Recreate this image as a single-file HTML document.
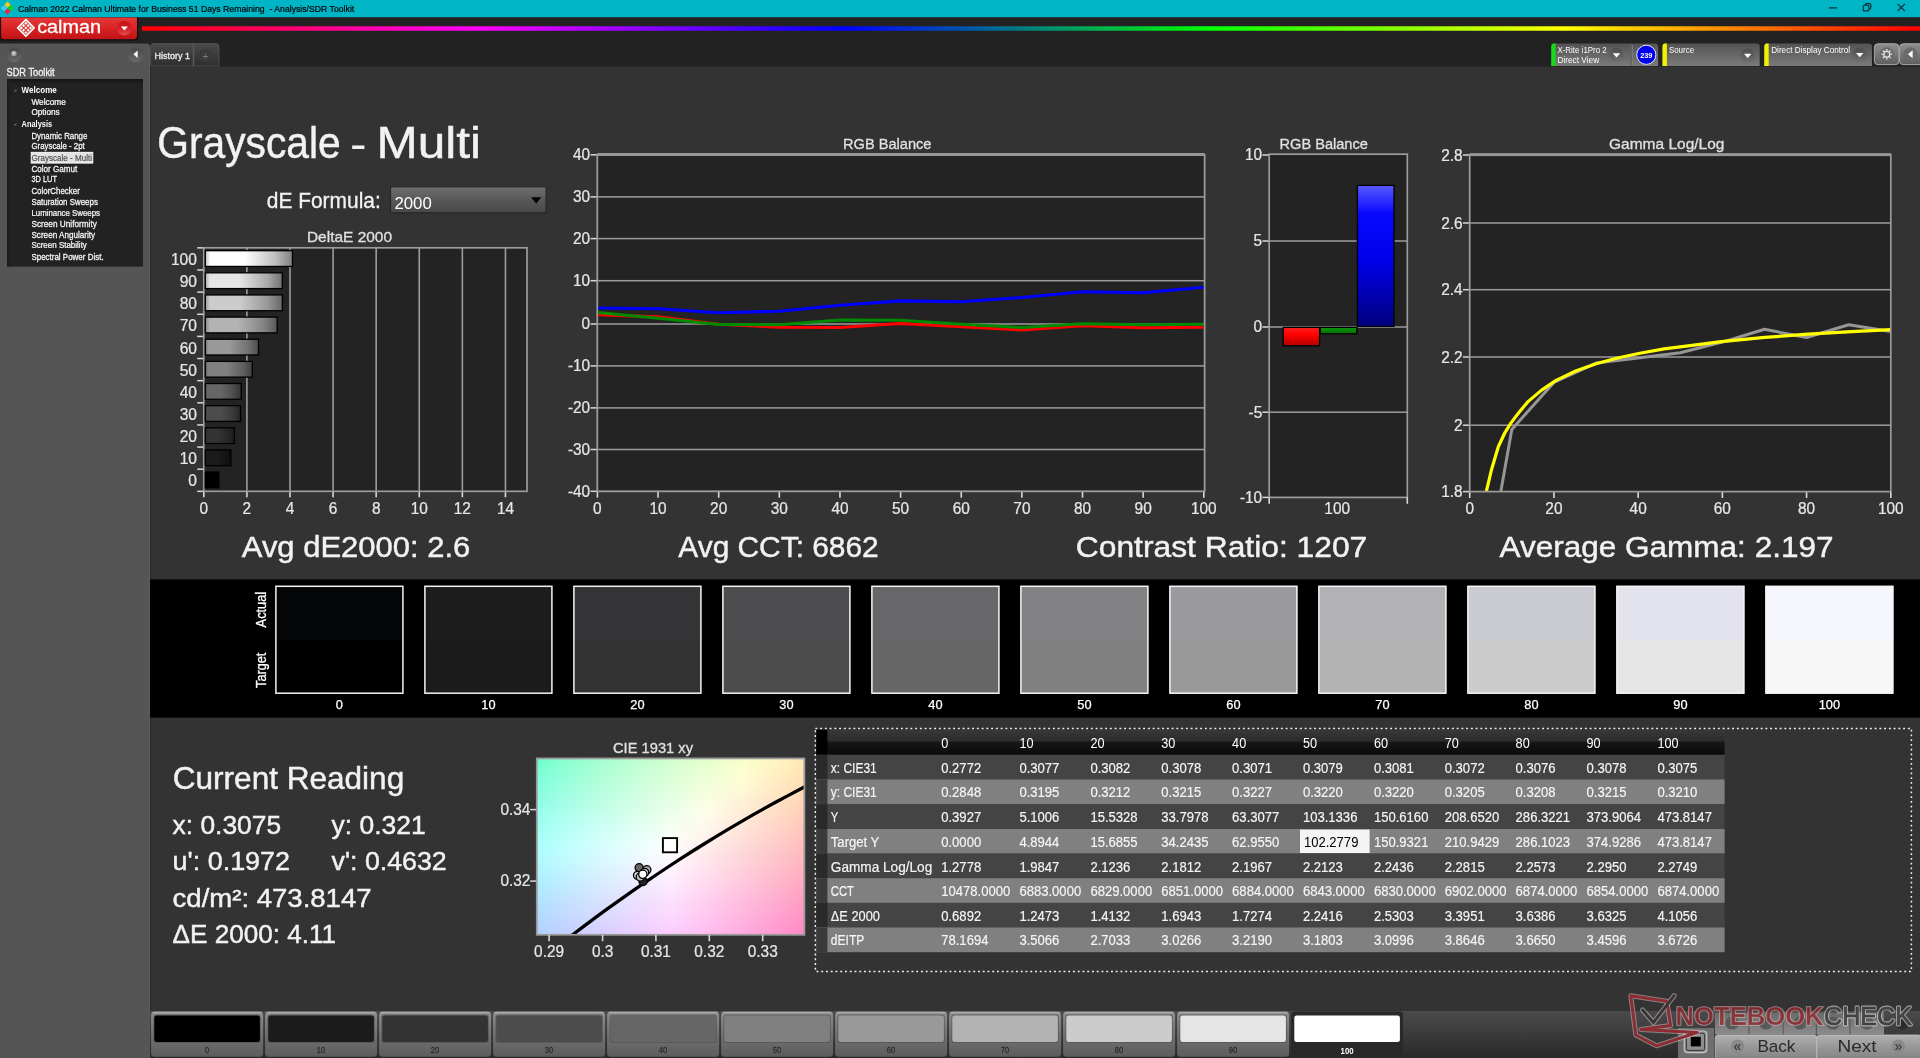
<!DOCTYPE html>
<html><head><meta charset="utf-8"><title>Calman 2022 - Analysis/SDR Toolkit</title>
<style>
html,body{margin:0;padding:0;background:#333333;overflow:hidden}
svg{display:block;font-family:"Liberation Sans",sans-serif;will-change:transform}
text{white-space:pre}
</style></head><body>
<svg width="1920" height="1058" viewBox="0 0 1920 1058">
<defs>
<linearGradient id="rb" x1="0" y1="0" x2="1" y2="0" ><stop offset="0" stop-color="#ff0000"/><stop offset="0.19" stop-color="#ff00ff"/><stop offset="0.395" stop-color="#0000ff"/><stop offset="0.6" stop-color="#00ff00"/><stop offset="0.8" stop-color="#ffff00"/><stop offset="1" stop-color="#ff0000"/></linearGradient>
<linearGradient id="logo" x1="0" y1="0" x2="0" y2="1" ><stop offset="0" stop-color="#e23a3a"/><stop offset="0.45" stop-color="#dc2424"/><stop offset="1" stop-color="#c01216"/></linearGradient>
<linearGradient id="ddr" x1="0" y1="0" x2="0" y2="1" ><stop offset="0" stop-color="#c80e16"/><stop offset="0.5" stop-color="#d42028"/><stop offset="1" stop-color="#e44c4c"/></linearGradient>
<linearGradient id="tab" x1="0" y1="0" x2="0" y2="1" ><stop offset="0" stop-color="#4a4a4a"/><stop offset="1" stop-color="#2e2e2e"/></linearGradient>
<linearGradient id="tb" x1="0" y1="0" x2="0" y2="1" ><stop offset="0" stop-color="#535353"/><stop offset="1" stop-color="#7a7a7a"/></linearGradient>
<linearGradient id="ddg" x1="0" y1="0" x2="0" y2="1" ><stop offset="0" stop-color="#4c4c4c"/><stop offset="1" stop-color="#707070"/></linearGradient>
<linearGradient id="gb" x1="0" y1="0" x2="0" y2="1" ><stop offset="0" stop-color="#8e8e8e"/><stop offset="0.5" stop-color="#777"/><stop offset="1" stop-color="#5e5e5e"/></linearGradient>
<linearGradient id="lb" x1="0" y1="0" x2="0" y2="1" ><stop offset="0" stop-color="#494949"/><stop offset="0.5" stop-color="#585858"/><stop offset="1" stop-color="#6a6a6a"/></linearGradient>
<radialGradient id="knob" cx="0.4" cy="0.35" r="0.7" ><stop offset="0" stop-color="#d8d8d8"/><stop offset="1" stop-color="#8c8c8c"/></radialGradient>
<linearGradient id="tbx" x1="0" y1="0" x2="0" y2="1" ><stop offset="0" stop-color="#141414"/><stop offset="1" stop-color="#222222"/></linearGradient>
<linearGradient id="tby" x1="0" y1="0" x2="1" y2="0" ><stop offset="0" stop-color="#1a1a1a"/><stop offset="1" stop-color="#222222"/></linearGradient>
<linearGradient id="dd" x1="0" y1="0" x2="0" y2="1" ><stop offset="0" stop-color="#707070"/><stop offset="0.5" stop-color="#585858"/><stop offset="1" stop-color="#484848"/></linearGradient>
<linearGradient id="deb0" x1="0" y1="0" x2="1" y2="0" ><stop offset="0" stop-color="#000000"/><stop offset="0.06" stop-color="#000000"/><stop offset="0.45" stop-color="#000000"/><stop offset="0.8" stop-color="#000000"/><stop offset="1" stop-color="#000000"/></linearGradient>
<linearGradient id="deb1" x1="0" y1="0" x2="1" y2="0" ><stop offset="0" stop-color="#141414"/><stop offset="0.06" stop-color="#1b1b1b"/><stop offset="0.45" stop-color="#1b1b1b"/><stop offset="0.8" stop-color="#141414"/><stop offset="1" stop-color="#0d0d0d"/></linearGradient>
<linearGradient id="deb2" x1="0" y1="0" x2="1" y2="0" ><stop offset="0" stop-color="#262626"/><stop offset="0.06" stop-color="#333333"/><stop offset="0.45" stop-color="#333333"/><stop offset="0.8" stop-color="#262626"/><stop offset="1" stop-color="#191919"/></linearGradient>
<linearGradient id="deb3" x1="0" y1="0" x2="1" y2="0" ><stop offset="0" stop-color="#393939"/><stop offset="0.06" stop-color="#4c4c4c"/><stop offset="0.45" stop-color="#4c4c4c"/><stop offset="0.8" stop-color="#393939"/><stop offset="1" stop-color="#262626"/></linearGradient>
<linearGradient id="deb4" x1="0" y1="0" x2="1" y2="0" ><stop offset="0" stop-color="#4c4c4c"/><stop offset="0.06" stop-color="#666666"/><stop offset="0.45" stop-color="#666666"/><stop offset="0.8" stop-color="#4c4c4c"/><stop offset="1" stop-color="#333333"/></linearGradient>
<linearGradient id="deb5" x1="0" y1="0" x2="1" y2="0" ><stop offset="0" stop-color="#606060"/><stop offset="0.06" stop-color="#808080"/><stop offset="0.45" stop-color="#808080"/><stop offset="0.8" stop-color="#606060"/><stop offset="1" stop-color="#404040"/></linearGradient>
<linearGradient id="deb6" x1="0" y1="0" x2="1" y2="0" ><stop offset="0" stop-color="#727272"/><stop offset="0.06" stop-color="#999999"/><stop offset="0.45" stop-color="#999999"/><stop offset="0.8" stop-color="#727272"/><stop offset="1" stop-color="#4c4c4c"/></linearGradient>
<linearGradient id="deb7" x1="0" y1="0" x2="1" y2="0" ><stop offset="0" stop-color="#868686"/><stop offset="0.06" stop-color="#b3b3b3"/><stop offset="0.45" stop-color="#b3b3b3"/><stop offset="0.8" stop-color="#868686"/><stop offset="1" stop-color="#595959"/></linearGradient>
<linearGradient id="deb8" x1="0" y1="0" x2="1" y2="0" ><stop offset="0" stop-color="#999999"/><stop offset="0.06" stop-color="#cccccc"/><stop offset="0.45" stop-color="#cccccc"/><stop offset="0.8" stop-color="#999999"/><stop offset="1" stop-color="#666666"/></linearGradient>
<linearGradient id="deb9" x1="0" y1="0" x2="1" y2="0" ><stop offset="0" stop-color="#ababab"/><stop offset="0.06" stop-color="#e5e5e5"/><stop offset="0.45" stop-color="#e5e5e5"/><stop offset="0.8" stop-color="#ababab"/><stop offset="1" stop-color="#727272"/></linearGradient>
<linearGradient id="deb10" x1="0" y1="0" x2="1" y2="0" ><stop offset="0" stop-color="#bfbfbf"/><stop offset="0.06" stop-color="#ffffff"/><stop offset="0.45" stop-color="#ffffff"/><stop offset="0.8" stop-color="#bfbfbf"/><stop offset="1" stop-color="#7f7f7f"/></linearGradient>
<clipPath id="qclip"><rect x="598.1999999999999" y="154.5" width="605.5" height="336.8"/></clipPath>
<linearGradient id="br" x1="0" y1="0" x2="0" y2="1" ><stop offset="0" stop-color="#ff2020"/><stop offset="0.4" stop-color="#ff0000"/><stop offset="1" stop-color="#b00000"/></linearGradient>
<linearGradient id="bgn" x1="0" y1="0" x2="0" y2="1" ><stop offset="0" stop-color="#10a010"/><stop offset="1" stop-color="#006a00"/></linearGradient>
<linearGradient id="bb" x1="0" y1="0" x2="0" y2="1" ><stop offset="0" stop-color="#5a5aff"/><stop offset="0.2" stop-color="#0808ff"/><stop offset="0.55" stop-color="#0000e8"/><stop offset="1" stop-color="#00007c"/></linearGradient>
<clipPath id="gclip"><rect x="1469.7" y="154.6" width="421.0999999999999" height="337.0"/></clipPath>
<clipPath id="cclip"><rect x="536.8" y="758.4" width="267.6" height="176.39999999999998"/></clipPath>
<filter id="vblur" x="-5%" y="-20%" width="110%" height="140%"><feGaussianBlur stdDeviation="0 4.5"/></filter>
<linearGradient id="cr0" x1="0" y1="0" x2="1" y2="0" ><stop offset="0" stop-color="#47ffc4"/><stop offset="0.125" stop-color="#75ffc3"/><stop offset="0.25" stop-color="#95ffc2"/><stop offset="0.375" stop-color="#afffc1"/><stop offset="0.5" stop-color="#c5ffc0"/><stop offset="0.625" stop-color="#daffbf"/><stop offset="0.75" stop-color="#edffbd"/><stop offset="0.875" stop-color="#feffbc"/><stop offset="1" stop-color="#ffefa9"/></linearGradient>
<linearGradient id="cr1" x1="0" y1="0" x2="1" y2="0" ><stop offset="0" stop-color="#52ffc9"/><stop offset="0.125" stop-color="#7cffc8"/><stop offset="0.25" stop-color="#9affc7"/><stop offset="0.375" stop-color="#b4ffc6"/><stop offset="0.5" stop-color="#caffc5"/><stop offset="0.625" stop-color="#deffc4"/><stop offset="0.75" stop-color="#f1ffc3"/><stop offset="0.875" stop-color="#fffbbe"/><stop offset="1" stop-color="#ffeaaa"/></linearGradient>
<linearGradient id="cr2" x1="0" y1="0" x2="1" y2="0" ><stop offset="0" stop-color="#5bffcd"/><stop offset="0.125" stop-color="#82ffcd"/><stop offset="0.25" stop-color="#a0ffcc"/><stop offset="0.375" stop-color="#b8ffcb"/><stop offset="0.5" stop-color="#ceffca"/><stop offset="0.625" stop-color="#e2ffc9"/><stop offset="0.75" stop-color="#f5ffc8"/><stop offset="0.875" stop-color="#fff7bf"/><stop offset="1" stop-color="#ffe6ab"/></linearGradient>
<linearGradient id="cr3" x1="0" y1="0" x2="1" y2="0" ><stop offset="0" stop-color="#64ffd2"/><stop offset="0.125" stop-color="#89ffd1"/><stop offset="0.25" stop-color="#a5ffd1"/><stop offset="0.375" stop-color="#bdffd0"/><stop offset="0.5" stop-color="#d3ffcf"/><stop offset="0.625" stop-color="#e7ffce"/><stop offset="0.75" stop-color="#f9ffcd"/><stop offset="0.875" stop-color="#fff3c0"/><stop offset="1" stop-color="#ffe2ac"/></linearGradient>
<linearGradient id="cr4" x1="0" y1="0" x2="1" y2="0" ><stop offset="0" stop-color="#6cffd7"/><stop offset="0.125" stop-color="#8fffd6"/><stop offset="0.25" stop-color="#aaffd5"/><stop offset="0.375" stop-color="#c2ffd5"/><stop offset="0.5" stop-color="#d7ffd4"/><stop offset="0.625" stop-color="#ebffd3"/><stop offset="0.75" stop-color="#feffd2"/><stop offset="0.875" stop-color="#ffefc0"/><stop offset="1" stop-color="#ffdead"/></linearGradient>
<linearGradient id="cr5" x1="0" y1="0" x2="1" y2="0" ><stop offset="0" stop-color="#73ffdb"/><stop offset="0.125" stop-color="#94ffdb"/><stop offset="0.25" stop-color="#afffda"/><stop offset="0.375" stop-color="#c7ffd9"/><stop offset="0.5" stop-color="#dcffd9"/><stop offset="0.625" stop-color="#efffd8"/><stop offset="0.75" stop-color="#fffcd4"/><stop offset="0.875" stop-color="#ffebc1"/><stop offset="1" stop-color="#ffdaaf"/></linearGradient>
<linearGradient id="cr6" x1="0" y1="0" x2="1" y2="0" ><stop offset="0" stop-color="#7affe0"/><stop offset="0.125" stop-color="#9affdf"/><stop offset="0.25" stop-color="#b4ffdf"/><stop offset="0.375" stop-color="#cbffde"/><stop offset="0.5" stop-color="#e0ffde"/><stop offset="0.625" stop-color="#f4ffdd"/><stop offset="0.75" stop-color="#fff8d5"/><stop offset="0.875" stop-color="#ffe6c2"/><stop offset="1" stop-color="#ffd5b0"/></linearGradient>
<linearGradient id="cr7" x1="0" y1="0" x2="1" y2="0" ><stop offset="0" stop-color="#81ffe4"/><stop offset="0.125" stop-color="#a0ffe4"/><stop offset="0.25" stop-color="#b9ffe4"/><stop offset="0.375" stop-color="#d0ffe3"/><stop offset="0.5" stop-color="#e5ffe3"/><stop offset="0.625" stop-color="#f8ffe2"/><stop offset="0.75" stop-color="#fff4d6"/><stop offset="0.875" stop-color="#ffe2c3"/><stop offset="1" stop-color="#ffd1b1"/></linearGradient>
<linearGradient id="cr8" x1="0" y1="0" x2="1" y2="0" ><stop offset="0" stop-color="#88ffe9"/><stop offset="0.125" stop-color="#a5ffe9"/><stop offset="0.25" stop-color="#beffe8"/><stop offset="0.375" stop-color="#d5ffe8"/><stop offset="0.5" stop-color="#e9ffe7"/><stop offset="0.625" stop-color="#fdffe7"/><stop offset="0.75" stop-color="#ffefd7"/><stop offset="0.875" stop-color="#ffdec4"/><stop offset="1" stop-color="#ffccb2"/></linearGradient>
<linearGradient id="cr9" x1="0" y1="0" x2="1" y2="0" ><stop offset="0" stop-color="#8effee"/><stop offset="0.125" stop-color="#abffed"/><stop offset="0.25" stop-color="#c3ffed"/><stop offset="0.375" stop-color="#d9ffed"/><stop offset="0.5" stop-color="#eeffec"/><stop offset="0.625" stop-color="#fffdea"/><stop offset="0.75" stop-color="#ffebd7"/><stop offset="0.875" stop-color="#ffd9c5"/><stop offset="1" stop-color="#ffc8b3"/></linearGradient>
<linearGradient id="cr10" x1="0" y1="0" x2="1" y2="0" ><stop offset="0" stop-color="#94fff2"/><stop offset="0.125" stop-color="#b0fff2"/><stop offset="0.25" stop-color="#c8fff2"/><stop offset="0.375" stop-color="#defff2"/><stop offset="0.5" stop-color="#f2fff1"/><stop offset="0.625" stop-color="#fff8eb"/><stop offset="0.75" stop-color="#ffe6d8"/><stop offset="0.875" stop-color="#ffd5c6"/><stop offset="1" stop-color="#ffc3b4"/></linearGradient>
<linearGradient id="cr11" x1="0" y1="0" x2="1" y2="0" ><stop offset="0" stop-color="#9afff7"/><stop offset="0.125" stop-color="#b5fff7"/><stop offset="0.25" stop-color="#cdfff7"/><stop offset="0.375" stop-color="#e3fff6"/><stop offset="0.5" stop-color="#f7fff6"/><stop offset="0.625" stop-color="#fff4eb"/><stop offset="0.75" stop-color="#ffe2d9"/><stop offset="0.875" stop-color="#ffd0c7"/><stop offset="1" stop-color="#ffbfb5"/></linearGradient>
<linearGradient id="cr12" x1="0" y1="0" x2="1" y2="0" ><stop offset="0" stop-color="#a0fffb"/><stop offset="0.125" stop-color="#bbfffb"/><stop offset="0.25" stop-color="#d2fffb"/><stop offset="0.375" stop-color="#e8fffb"/><stop offset="0.5" stop-color="#fcfffb"/><stop offset="0.625" stop-color="#ffefec"/><stop offset="0.75" stop-color="#ffddd9"/><stop offset="0.875" stop-color="#ffccc7"/><stop offset="1" stop-color="#ffbab6"/></linearGradient>
<linearGradient id="cr13" x1="0" y1="0" x2="1" y2="0" ><stop offset="0" stop-color="#a4feff"/><stop offset="0.125" stop-color="#bffeff"/><stop offset="0.25" stop-color="#d6feff"/><stop offset="0.375" stop-color="#ebfeff"/><stop offset="0.5" stop-color="#fffeff"/><stop offset="0.625" stop-color="#ffebec"/><stop offset="0.75" stop-color="#ffd9da"/><stop offset="0.875" stop-color="#ffc7c8"/><stop offset="1" stop-color="#ffb5b7"/></linearGradient>
<linearGradient id="cr14" x1="0" y1="0" x2="1" y2="0" ><stop offset="0" stop-color="#a5f9ff"/><stop offset="0.125" stop-color="#bff9ff"/><stop offset="0.25" stop-color="#d6f9ff"/><stop offset="0.375" stop-color="#ebf9ff"/><stop offset="0.5" stop-color="#fff9ff"/><stop offset="0.625" stop-color="#ffe6ed"/><stop offset="0.75" stop-color="#ffd4db"/><stop offset="0.875" stop-color="#ffc2c9"/><stop offset="1" stop-color="#ffb0b8"/></linearGradient>
<linearGradient id="cr15" x1="0" y1="0" x2="1" y2="0" ><stop offset="0" stop-color="#a5f5ff"/><stop offset="0.125" stop-color="#bff5ff"/><stop offset="0.25" stop-color="#d6f4ff"/><stop offset="0.375" stop-color="#ebf4ff"/><stop offset="0.5" stop-color="#fef4ff"/><stop offset="0.625" stop-color="#ffe2ed"/><stop offset="0.75" stop-color="#ffcfdb"/><stop offset="0.875" stop-color="#ffbdca"/><stop offset="1" stop-color="#ffabb9"/></linearGradient>
<linearGradient id="cr16" x1="0" y1="0" x2="1" y2="0" ><stop offset="0" stop-color="#a6f0ff"/><stop offset="0.125" stop-color="#bff0ff"/><stop offset="0.25" stop-color="#d6efff"/><stop offset="0.375" stop-color="#ebefff"/><stop offset="0.5" stop-color="#feefff"/><stop offset="0.625" stop-color="#ffddee"/><stop offset="0.75" stop-color="#ffcbdc"/><stop offset="0.875" stop-color="#ffb8cb"/><stop offset="1" stop-color="#ffa6ba"/></linearGradient>
<linearGradient id="cr17" x1="0" y1="0" x2="1" y2="0" ><stop offset="0" stop-color="#a6ebff"/><stop offset="0.125" stop-color="#bfebff"/><stop offset="0.25" stop-color="#d6ebff"/><stop offset="0.375" stop-color="#eaeaff"/><stop offset="0.5" stop-color="#feeaff"/><stop offset="0.625" stop-color="#ffd8ee"/><stop offset="0.75" stop-color="#ffc6dd"/><stop offset="0.875" stop-color="#ffb3cb"/><stop offset="1" stop-color="#ffa1bb"/></linearGradient>
<linearGradient id="cr18" x1="0" y1="0" x2="1" y2="0" ><stop offset="0" stop-color="#a7e7ff"/><stop offset="0.125" stop-color="#c0e6ff"/><stop offset="0.25" stop-color="#d6e6ff"/><stop offset="0.375" stop-color="#eae5ff"/><stop offset="0.5" stop-color="#fde5ff"/><stop offset="0.625" stop-color="#ffd3ef"/><stop offset="0.75" stop-color="#ffc1dd"/><stop offset="0.875" stop-color="#ffaecc"/><stop offset="1" stop-color="#ff9cbb"/></linearGradient>
<linearGradient id="cr19" x1="0" y1="0" x2="1" y2="0" ><stop offset="0" stop-color="#a7e2ff"/><stop offset="0.125" stop-color="#c0e1ff"/><stop offset="0.25" stop-color="#d6e1ff"/><stop offset="0.375" stop-color="#eae0ff"/><stop offset="0.5" stop-color="#fddfff"/><stop offset="0.625" stop-color="#ffceef"/><stop offset="0.75" stop-color="#ffbcde"/><stop offset="0.875" stop-color="#ffa9cd"/><stop offset="1" stop-color="#ff96bc"/></linearGradient>
<linearGradient id="cr20" x1="0" y1="0" x2="1" y2="0" ><stop offset="0" stop-color="#a8ddff"/><stop offset="0.125" stop-color="#c0dcff"/><stop offset="0.25" stop-color="#d6dcff"/><stop offset="0.375" stop-color="#eadbff"/><stop offset="0.5" stop-color="#fddaff"/><stop offset="0.625" stop-color="#ffc9ef"/><stop offset="0.75" stop-color="#ffb7de"/><stop offset="0.875" stop-color="#ffa4ce"/><stop offset="1" stop-color="#ff90bd"/></linearGradient>
<linearGradient id="cr21" x1="0" y1="0" x2="1" y2="0" ><stop offset="0" stop-color="#a8d8ff"/><stop offset="0.125" stop-color="#c0d7ff"/><stop offset="0.25" stop-color="#d6d7ff"/><stop offset="0.375" stop-color="#ead6ff"/><stop offset="0.5" stop-color="#fcd5ff"/><stop offset="0.625" stop-color="#ffc4f0"/><stop offset="0.75" stop-color="#ffb1df"/><stop offset="0.875" stop-color="#ff9ece"/><stop offset="1" stop-color="#ff8abe"/></linearGradient>
<linearGradient id="cr22" x1="0" y1="0" x2="1" y2="0" ><stop offset="0" stop-color="#a9d3ff"/><stop offset="0.125" stop-color="#c0d2ff"/><stop offset="0.25" stop-color="#d6d1ff"/><stop offset="0.375" stop-color="#ead0ff"/><stop offset="0.5" stop-color="#fcd0ff"/><stop offset="0.625" stop-color="#ffbff0"/><stop offset="0.75" stop-color="#ffacdf"/><stop offset="0.875" stop-color="#ff99cf"/><stop offset="1" stop-color="#ff84bf"/></linearGradient>
<linearGradient id="cr23" x1="0" y1="0" x2="1" y2="0" ><stop offset="0" stop-color="#a9ceff"/><stop offset="0.125" stop-color="#c1cdff"/><stop offset="0.25" stop-color="#d6ccff"/><stop offset="0.375" stop-color="#e9cbff"/><stop offset="0.5" stop-color="#fccaff"/><stop offset="0.625" stop-color="#ffbaf1"/><stop offset="0.75" stop-color="#ffa7e0"/><stop offset="0.875" stop-color="#ff93d0"/><stop offset="1" stop-color="#ff7ec0"/></linearGradient>
<linearGradient id="cr24" x1="0" y1="0" x2="1" y2="0" ><stop offset="0" stop-color="#a9c9ff"/><stop offset="0.125" stop-color="#c1c8ff"/><stop offset="0.25" stop-color="#d6c7ff"/><stop offset="0.375" stop-color="#e9c6ff"/><stop offset="0.5" stop-color="#fbc5ff"/><stop offset="0.625" stop-color="#ffb5f1"/><stop offset="0.75" stop-color="#ffa1e1"/><stop offset="0.875" stop-color="#ff8dd0"/><stop offset="1" stop-color="#ff77c0"/></linearGradient>
<linearGradient id="cr25" x1="0" y1="0" x2="1" y2="0" ><stop offset="0" stop-color="#aac4ff"/><stop offset="0.125" stop-color="#c1c3ff"/><stop offset="0.25" stop-color="#d6c2ff"/><stop offset="0.375" stop-color="#e9c0ff"/><stop offset="0.5" stop-color="#fbbfff"/><stop offset="0.625" stop-color="#ffaff2"/><stop offset="0.75" stop-color="#ff9be1"/><stop offset="0.875" stop-color="#ff86d1"/><stop offset="1" stop-color="#ff6fc1"/></linearGradient>
<linearGradient id="th" x1="0" y1="0" x2="0" y2="1" ><stop offset="0" stop-color="#383838"/><stop offset="0.45" stop-color="#2c2c2c"/><stop offset="0.5" stop-color="#161616"/><stop offset="1" stop-color="#0a0a0a"/></linearGradient>
<linearGradient id="bs" x1="0" y1="0" x2="0" y2="1" ><stop offset="0" stop-color="#4a4a4a"/><stop offset="0.2" stop-color="#444444"/><stop offset="1" stop-color="#2a2a2a"/></linearGradient>
<linearGradient id="bbtn" x1="0" y1="0" x2="0" y2="1" ><stop offset="0" stop-color="#8e8e8e"/><stop offset="0.5" stop-color="#737373"/><stop offset="1" stop-color="#5c5c5c"/></linearGradient>
<linearGradient id="nb" x1="0" y1="0" x2="0" y2="1" ><stop offset="0" stop-color="#b0b0b0"/><stop offset="0.5" stop-color="#929292"/><stop offset="1" stop-color="#7c7c7c"/></linearGradient>
<linearGradient id="nb2" x1="0" y1="0" x2="0" y2="1" ><stop offset="0" stop-color="#6a6a6a"/><stop offset="1" stop-color="#8c8c8c"/></linearGradient>
</defs>
<rect x="0" y="0" width="1920" height="1058" fill="#333333" />
<rect x="0" y="0" width="1920" height="17.4" fill="#00b5c5" />
<path d="M7.5 1.6L10.6 4.7L7.5 7.8L4.4 4.7Z" fill="#ffc814"/>
<path d="M4 5L7.1 8.1L4 11.2L0.9 8.1Z" fill="#48c8f8"/>
<path d="M10.9 5L14 8.1L10.9 11.2L7.8 8.1Z" fill="#10d018"/>
<path d="M7.5 8.4L10.6 11.5L7.5 14.6L4.4 11.5Z" fill="#f02058"/>
<text transform="translate(17.9,11.9) scale(0.8962,1)" font-size="9.7" fill="#000" text-anchor="start" font-weight="normal" stroke="#000" stroke-width="0.2">Calman 2022 Calman Ultimate for Business 51 Days Remaining  - Analysis/SDR Toolkit</text>
<line x1="1829" y1="7.9" x2="1837" y2="7.9" stroke="#0a2a30" stroke-width="1.2" />
<rect x="1863.3" y="5.3" width="5.6" height="5.6" rx="1" fill="none" stroke="#0a2a30" stroke-width="1.1"/>
<path d="M1865.3 5.2V4.6Q1865.3 3.6 1866.3 3.6H1869.6Q1870.8 3.6 1870.8 4.8V8Q1870.8 9 1869.8 9H1869.2" fill="none" stroke="#0a2a30" stroke-width="1.1"/>
<path d="M1897.6 3.9L1904.9 11.1M1904.9 3.9L1897.6 11.1" stroke="#0a2a30" stroke-width="1.2" fill="none"/>
<rect x="0" y="17.4" width="1920" height="49.2" fill="#222222" />
<rect x="142" y="26.4" width="1778" height="4.2" fill="url(#rb)"/>
<rect x="142" y="26" width="1778" height="5" fill="url(#rb)" opacity="0.35"/>
<path d="M1 17.4H137V36.5Q137 39.3 134 39.3H4Q1 39.3 1 36.5Z" fill="url(#logo)"/>
<path d="M0.5 17.4V37Q0.5 40 4 40H134Q137.6 40 137.6 37V17.4" fill="none" stroke="#160404" stroke-width="1.2" opacity="0.9"/>
<path d="M25.9 19.7L34.099999999999994 27.9L25.9 36.099999999999994L17.7 27.9Z" fill="none" stroke="#fff" stroke-width="1.7" stroke-linejoin="round"/>
<path d="M25.9 21.7L27.5 23.3L25.9 24.9L24.3 23.3Z" fill="#fff"/>
<path d="M23.6 24L25.2 25.6L23.6 27.2L22 25.6Z" fill="#fff"/>
<path d="M21.3 26.3L22.9 27.9L21.3 29.5L19.7 27.9Z" fill="#fff"/>
<path d="M28.2 24L29.8 25.6L28.2 27.2L26.6 25.6Z" fill="#fff"/>
<path d="M25.9 26.3L27.5 27.9L25.9 29.5L24.3 27.9Z" fill="#fff"/>
<path d="M23.6 28.6L25.2 30.2L23.6 31.8L22 30.2Z" fill="#fff"/>
<path d="M30.5 26.3L32.1 27.9L30.5 29.5L28.9 27.9Z" fill="#fff"/>
<path d="M28.2 28.6L29.8 30.2L28.2 31.8L26.6 30.2Z" fill="#fff"/>
<path d="M25.9 30.9L27.5 32.5L25.9 34.1L24.3 32.5Z" fill="#fff"/>
<text transform="translate(37.2,32.7) scale(1.1056,1)" font-size="17.9" fill="#fff" text-anchor="start" font-weight="normal" stroke="#fff" stroke-width="0.28">calman</text>
<circle cx="124.4" cy="28.2" r="7.3" fill="url(#ddr)"/>
<path d="M120.9 26.6H127.9L124.4 30.6Z" fill="#fff"/>
<path d="M150.7 66V46.5Q150.7 43.6 153.7 43.6H216Q219 43.6 219 46.5V66Z" fill="url(#tab)" stroke="#555" stroke-width="0.8"/>
<rect x="192.7" y="44" width="1.6" height="22" fill="#585858" />
<text transform="translate(154.5,58.6) scale(0.935,1)" font-size="9.6" fill="#f0f0f0" text-anchor="start" font-weight="normal" stroke="#f0f0f0" stroke-width="0.3">History 1</text>
<circle cx="205.3" cy="55.5" r="6.8" fill="#3a3a3a"/>
<text transform="translate(205.3,60)" font-size="10" fill="#777" text-anchor="middle" font-weight="normal" >+</text>
<path d="M1551.3 66V46.4Q1551.3 43.5 1554.3 43.5H1655.2Q1658.2 43.5 1658.2 46.4V66Z" fill="url(#tb)"/>
<path d="M1551.3 66V46.4Q1551.3 43.8 1553.3 43.6H1555.7V66Z" fill="#18d818"/>
<rect x="1630.6" y="45" width="1.2" height="21" fill="#5a5a5a" />
<rect x="1631.8" y="45" width="0.8" height="21" fill="#8a8a8a" />
<text transform="translate(1557.4,52.8) scale(0.8626,1)" font-size="9.2" fill="#fff" text-anchor="start" font-weight="normal" >X-Rite i1Pro 2</text>
<text transform="translate(1557.4,63.2) scale(0.9017,1)" font-size="9.2" fill="#fff" text-anchor="start" font-weight="normal" >Direct View</text>
<circle cx="1616.5" cy="55.2" r="7.2" fill="url(#ddg)"/>
<path d="M1612.8 53.300000000000004H1620.2L1616.5 57.6Z" fill="#fff"/>
<circle cx="1646.3" cy="54.8" r="9.6" fill="#0000f0" stroke="#e8e8ff" stroke-width="1"/>
<text transform="translate(1646.3,57.8) scale(0.92,1)" font-size="8" fill="#fff" text-anchor="middle" font-weight="bold" >239</text>
<path d="M1662.5 66V46.4Q1662.5 43.5 1665.5 43.5H1756.7Q1759.7 43.5 1759.7 46.4V66Z" fill="url(#tb)"/>
<path d="M1662.5 66V46.4Q1662.5 43.8 1664.5 43.6H1666.9V66Z" fill="#f2f200"/>
<text transform="translate(1668.9,52.8) scale(0.8645,1)" font-size="9.2" fill="#fff" text-anchor="start" font-weight="normal" >Source</text>
<circle cx="1747.7" cy="55.6" r="7.2" fill="url(#ddg)"/>
<path d="M1744.0 53.7H1751.4L1747.7 58.0Z" fill="#fff"/>
<path d="M1764.3 66V46.4Q1764.3 43.5 1767.3 43.5H1869Q1872 43.5 1872 46.4V66Z" fill="url(#tb)"/>
<path d="M1764.3 66V46.4Q1764.3 43.8 1766.3 43.6H1768.7V66Z" fill="#f2f200"/>
<text transform="translate(1771.2,52.8) scale(0.888,1)" font-size="9.2" fill="#fff" text-anchor="start" font-weight="normal" >Direct Display Control</text>
<circle cx="1859.7" cy="54.8" r="7.2" fill="url(#ddg)"/>
<path d="M1856.0 52.9H1863.4L1859.7 57.199999999999996Z" fill="#fff"/>
<rect x="1874.4" y="43.8" width="24.6" height="20.8" rx="3.5" fill="url(#gb)" stroke="#a8a8a8" stroke-width="1"/>
<rect x="1899.6" y="43.8" width="24.6" height="20.8" rx="3.5" fill="url(#gb)" stroke="#a8a8a8" stroke-width="1"/>
<circle cx="1886.8" cy="54.2" r="7" fill="#6a6a6a"/>
<circle cx="1910.5" cy="54.2" r="7" fill="#6a6a6a"/>
<line x1="1890.20" y1="54.20" x2="1892.10" y2="54.20" stroke="#e6e6e6" stroke-width="1.35"/><line x1="1889.20" y1="56.60" x2="1890.55" y2="57.95" stroke="#e6e6e6" stroke-width="1.35"/><line x1="1886.80" y1="57.60" x2="1886.80" y2="59.50" stroke="#e6e6e6" stroke-width="1.35"/><line x1="1884.40" y1="56.60" x2="1883.05" y2="57.95" stroke="#e6e6e6" stroke-width="1.35"/><line x1="1883.40" y1="54.20" x2="1881.50" y2="54.20" stroke="#e6e6e6" stroke-width="1.35"/><line x1="1884.40" y1="51.80" x2="1883.05" y2="50.45" stroke="#e6e6e6" stroke-width="1.35"/><line x1="1886.80" y1="50.80" x2="1886.80" y2="48.90" stroke="#e6e6e6" stroke-width="1.35"/><line x1="1889.20" y1="51.80" x2="1890.55" y2="50.45" stroke="#e6e6e6" stroke-width="1.35"/>
<circle cx="1886.8" cy="54.2" r="2.9" fill="none" stroke="#e6e6e6" stroke-width="1.2"/>
<path d="M1912.6 50.2V58.2L1908 54.2Z" fill="#fff"/>
<path d="M0 1058V43.4H146.4Q150 43.4 150 47V1058Z" fill="#555555"/>
<rect x="149.2" y="48" width="0.8" height="963" fill="#5e5e5e" />
<rect x="150" y="66" width="1" height="945" fill="#2b2b2b" />
<circle cx="14.1" cy="54.8" r="7.5" fill="url(#lb)"/>
<circle cx="14" cy="53.6" r="2.7" fill="url(#knob)"/>
<circle cx="135.6" cy="54.8" r="7.5" fill="url(#lb)"/>
<path d="M137.6 50.4V58L133.4 54.2Z" fill="#fff"/>
<text transform="translate(6.5,75.9) scale(0.8735,1)" font-size="10.6" fill="#f4f4f4" text-anchor="start" font-weight="normal" stroke="#f4f4f4" stroke-width="0.3">SDR Toolkit</text>
<rect x="7" y="79" width="136" height="187.6" fill="#222222" />
<rect x="7" y="79" width="136" height="5" fill="url(#tbx)" />
<rect x="7" y="79" width="4" height="187.6" fill="url(#tby)" />
<text transform="translate(21.6,93) scale(0.9499,1)" font-size="8.5" fill="#fff" text-anchor="start" font-weight="bold" >Welcome</text>
<path d="M16.4 88.8V91.6H13.6Z" fill="#666"/>
<text transform="translate(31.4,104.5) scale(0.9898,1)" font-size="8.4" fill="#f6f6f6" text-anchor="start" font-weight="normal" stroke="#f6f6f6" stroke-width="0.25">Welcome</text>
<text transform="translate(31.4,115.2) scale(0.9741,1)" font-size="8.4" fill="#f6f6f6" text-anchor="start" font-weight="normal" stroke="#f6f6f6" stroke-width="0.25">Options</text>
<text transform="translate(21.6,126.8) scale(0.8752,1)" font-size="8.5" fill="#fff" text-anchor="start" font-weight="bold" >Analysis</text>
<path d="M16.4 122.6V125.39999999999999H13.6Z" fill="#666"/>
<text transform="translate(31.4,138.5) scale(0.9371,1)" font-size="8.4" fill="#f6f6f6" text-anchor="start" font-weight="normal" stroke="#f6f6f6" stroke-width="0.25">Dynamic Range</text>
<text transform="translate(31.4,149.3) scale(0.9393,1)" font-size="8.4" fill="#f6f6f6" text-anchor="start" font-weight="normal" stroke="#f6f6f6" stroke-width="0.25">Grayscale - 2pt</text>
<rect x="31.2" y="152.29999999999998" width="61.6" height="10.8" fill="#e2e2e2" stroke="#fff" stroke-width="0.9"/>
<text transform="translate(31.6,160.5) scale(0.9601,1)" font-size="8.4" fill="#555" text-anchor="start" font-weight="normal" stroke="#555" stroke-width="0.2">Grayscale - Multi</text>
<text transform="translate(31.4,171.7) scale(0.9661,1)" font-size="8.4" fill="#f6f6f6" text-anchor="start" font-weight="normal" stroke="#f6f6f6" stroke-width="0.25">Color Gamut</text>
<text transform="translate(31.4,182.3) scale(0.8845,1)" font-size="8.4" fill="#f6f6f6" text-anchor="start" font-weight="normal" stroke="#f6f6f6" stroke-width="0.25">3D LUT</text>
<text transform="translate(31.4,193.5) scale(0.9444,1)" font-size="8.4" fill="#f6f6f6" text-anchor="start" font-weight="normal" stroke="#f6f6f6" stroke-width="0.25">ColorChecker</text>
<text transform="translate(31.4,204.7) scale(0.9445,1)" font-size="8.4" fill="#f6f6f6" text-anchor="start" font-weight="normal" stroke="#f6f6f6" stroke-width="0.25">Saturation Sweeps</text>
<text transform="translate(31.4,215.5) scale(0.9357,1)" font-size="8.4" fill="#f6f6f6" text-anchor="start" font-weight="normal" stroke="#f6f6f6" stroke-width="0.25">Luminance Sweeps</text>
<text transform="translate(31.4,226.6) scale(0.9812,1)" font-size="8.4" fill="#f6f6f6" text-anchor="start" font-weight="normal" stroke="#f6f6f6" stroke-width="0.25">Screen Uniformity</text>
<text transform="translate(31.4,237.7) scale(0.969,1)" font-size="8.4" fill="#f6f6f6" text-anchor="start" font-weight="normal" stroke="#f6f6f6" stroke-width="0.25">Screen Angularity</text>
<text transform="translate(31.4,248.4) scale(0.9509,1)" font-size="8.4" fill="#f6f6f6" text-anchor="start" font-weight="normal" stroke="#f6f6f6" stroke-width="0.25">Screen Stability</text>
<text transform="translate(31.4,259.5) scale(0.9488,1)" font-size="8.4" fill="#f6f6f6" text-anchor="start" font-weight="normal" stroke="#f6f6f6" stroke-width="0.25">Spectral Power Dist.</text>
<text transform="translate(157.2,158.2) scale(0.9355,1)" font-size="43.6" fill="#f2f2f2" text-anchor="start" font-weight="normal" stroke="#f2f2f2" stroke-width="0.45">Grayscale</text>
<text transform="translate(350.1,158.9) scale(1.14,1)" font-size="43.6" fill="#f2f2f2" text-anchor="start" font-weight="normal" >-</text>
<text transform="translate(376.4,158.2) scale(1.1362,1)" font-size="43.6" fill="#f2f2f2" text-anchor="start" font-weight="normal" stroke="#f2f2f2" stroke-width="0.45">Multi</text>
<text transform="translate(266.8,207.6) scale(0.9601,1)" font-size="21.8" fill="#f2f2f2" text-anchor="start" font-weight="normal" stroke="#f2f2f2" stroke-width="0.3">dE Formula:</text>
<rect x="390.5" y="186.8" width="155.6" height="26" fill="url(#dd)" stroke="#272727" stroke-width="1.2"/>
<text transform="translate(394.4,208.8) scale(1.0067,1)" font-size="16.7" fill="#fff" text-anchor="start" font-weight="normal" >2000</text>
<path d="M531 197.3H541.4L536.2 203.4Z" fill="#000"/>
<rect x="203.8" y="247.8" width="323.2" height="243.5" fill="#232323" />
<text transform="translate(349.5,241.9) scale(1.0184,1)" font-size="15.2" fill="#e0e0e0" text-anchor="middle" font-weight="normal" stroke="#e0e0e0" stroke-width="0.3">DeltaE 2000</text>
<rect x="246.093" y="247.8" width="1.6" height="243.5" fill="#9c9c9c" />
<rect x="246.093" y="491.3" width="1.6" height="6" fill="#d8d8d8" />
<rect x="289.187" y="247.8" width="1.6" height="243.5" fill="#9c9c9c" />
<rect x="289.187" y="491.3" width="1.6" height="6" fill="#d8d8d8" />
<rect x="332.28" y="247.8" width="1.6" height="243.5" fill="#9c9c9c" />
<rect x="332.28" y="491.3" width="1.6" height="6" fill="#d8d8d8" />
<rect x="375.373" y="247.8" width="1.6" height="243.5" fill="#9c9c9c" />
<rect x="375.373" y="491.3" width="1.6" height="6" fill="#d8d8d8" />
<rect x="418.467" y="247.8" width="1.6" height="243.5" fill="#9c9c9c" />
<rect x="418.467" y="491.3" width="1.6" height="6" fill="#d8d8d8" />
<rect x="461.56" y="247.8" width="1.6" height="243.5" fill="#9c9c9c" />
<rect x="461.56" y="491.3" width="1.6" height="6" fill="#d8d8d8" />
<rect x="504.653" y="247.8" width="1.6" height="243.5" fill="#9c9c9c" />
<rect x="504.653" y="491.3" width="1.6" height="6" fill="#d8d8d8" />
<rect x="203" y="491.3" width="1.6" height="6" fill="#d8d8d8" />
<rect x="203.8" y="247.8" width="323.2" height="243.5" fill="none" stroke="#9c9c9c" stroke-width="1.7"/>
<rect x="197.2" y="468.464" width="6" height="1.5" fill="#d8d8d8" />
<rect x="205.3" y="472.064" width="13.55" height="15.7364" fill="url(#deb0)" stroke="#000" stroke-width="1.3"/>
<text transform="translate(197,486.332) scale(0.97,1)" font-size="16.1" fill="#e6e6e6" text-anchor="end" font-weight="normal" stroke="#e6e6e6" stroke-width="0.25">0</text>
<rect x="197.2" y="446.327" width="6" height="1.5" fill="#d8d8d8" />
<rect x="205.3" y="449.927" width="25.5752" height="15.7364" fill="url(#deb1)" stroke="#000" stroke-width="1.3"/>
<text transform="translate(197,464.195) scale(0.97,1)" font-size="16.1" fill="#e6e6e6" text-anchor="end" font-weight="normal" stroke="#e6e6e6" stroke-width="0.25">10</text>
<rect x="197.2" y="424.191" width="6" height="1.5" fill="#d8d8d8" />
<rect x="205.3" y="427.791" width="29.1497" height="15.7364" fill="url(#deb2)" stroke="#000" stroke-width="1.3"/>
<text transform="translate(197,442.059) scale(0.97,1)" font-size="16.1" fill="#e6e6e6" text-anchor="end" font-weight="normal" stroke="#e6e6e6" stroke-width="0.25">20</text>
<rect x="197.2" y="402.055" width="6" height="1.5" fill="#d8d8d8" />
<rect x="205.3" y="405.655" width="35.2065" height="15.7364" fill="url(#deb3)" stroke="#000" stroke-width="1.3"/>
<text transform="translate(197,419.923) scale(0.97,1)" font-size="16.1" fill="#e6e6e6" text-anchor="end" font-weight="normal" stroke="#e6e6e6" stroke-width="0.25">30</text>
<rect x="197.2" y="379.918" width="6" height="1.5" fill="#d8d8d8" />
<rect x="205.3" y="383.518" width="35.9197" height="15.7364" fill="url(#deb4)" stroke="#000" stroke-width="1.3"/>
<text transform="translate(197,397.786) scale(0.97,1)" font-size="16.1" fill="#e6e6e6" text-anchor="end" font-weight="normal" stroke="#e6e6e6" stroke-width="0.25">40</text>
<rect x="197.2" y="357.782" width="6" height="1.5" fill="#d8d8d8" />
<rect x="205.3" y="361.382" width="46.999" height="15.7364" fill="url(#deb5)" stroke="#000" stroke-width="1.3"/>
<text transform="translate(197,375.65) scale(0.97,1)" font-size="16.1" fill="#e6e6e6" text-anchor="end" font-weight="normal" stroke="#e6e6e6" stroke-width="0.25">50</text>
<rect x="197.2" y="335.645" width="6" height="1.5" fill="#d8d8d8" />
<rect x="205.3" y="339.245" width="53.2195" height="15.7364" fill="url(#deb6)" stroke="#000" stroke-width="1.3"/>
<text transform="translate(197,353.514) scale(0.97,1)" font-size="16.1" fill="#e6e6e6" text-anchor="end" font-weight="normal" stroke="#e6e6e6" stroke-width="0.25">60</text>
<rect x="197.2" y="313.509" width="6" height="1.5" fill="#d8d8d8" />
<rect x="205.3" y="317.109" width="71.8531" height="15.7364" fill="url(#deb7)" stroke="#000" stroke-width="1.3"/>
<text transform="translate(197,331.377) scale(0.97,1)" font-size="16.1" fill="#e6e6e6" text-anchor="end" font-weight="normal" stroke="#e6e6e6" stroke-width="0.25">70</text>
<rect x="197.2" y="291.373" width="6" height="1.5" fill="#d8d8d8" />
<rect x="205.3" y="294.973" width="77.0997" height="15.7364" fill="url(#deb8)" stroke="#000" stroke-width="1.3"/>
<text transform="translate(197,309.241) scale(0.97,1)" font-size="16.1" fill="#e6e6e6" text-anchor="end" font-weight="normal" stroke="#e6e6e6" stroke-width="0.25">80</text>
<rect x="197.2" y="269.236" width="6" height="1.5" fill="#d8d8d8" />
<rect x="205.3" y="272.836" width="76.9683" height="15.7364" fill="url(#deb9)" stroke="#000" stroke-width="1.3"/>
<text transform="translate(197,287.105) scale(0.97,1)" font-size="16.1" fill="#e6e6e6" text-anchor="end" font-weight="normal" stroke="#e6e6e6" stroke-width="0.25">90</text>
<rect x="197.2" y="247.1" width="6" height="1.5" fill="#d8d8d8" />
<rect x="205.3" y="250.7" width="87.162" height="15.7364" fill="url(#deb10)" stroke="#000" stroke-width="1.3"/>
<text transform="translate(197,264.968) scale(0.97,1)" font-size="16.1" fill="#e6e6e6" text-anchor="end" font-weight="normal" stroke="#e6e6e6" stroke-width="0.25">100</text>
<rect x="197.2" y="490.6" width="6" height="1.5" fill="#d8d8d8" />
<text transform="translate(203.8,514) scale(0.97,1)" font-size="15.9" fill="#e6e6e6" text-anchor="middle" font-weight="normal" stroke="#e6e6e6" stroke-width="0.25">0</text>
<text transform="translate(246.893,514) scale(0.97,1)" font-size="15.9" fill="#e6e6e6" text-anchor="middle" font-weight="normal" stroke="#e6e6e6" stroke-width="0.25">2</text>
<text transform="translate(289.987,514) scale(0.97,1)" font-size="15.9" fill="#e6e6e6" text-anchor="middle" font-weight="normal" stroke="#e6e6e6" stroke-width="0.25">4</text>
<text transform="translate(333.08,514) scale(0.97,1)" font-size="15.9" fill="#e6e6e6" text-anchor="middle" font-weight="normal" stroke="#e6e6e6" stroke-width="0.25">6</text>
<text transform="translate(376.173,514) scale(0.97,1)" font-size="15.9" fill="#e6e6e6" text-anchor="middle" font-weight="normal" stroke="#e6e6e6" stroke-width="0.25">8</text>
<text transform="translate(419.267,514) scale(0.97,1)" font-size="15.9" fill="#e6e6e6" text-anchor="middle" font-weight="normal" stroke="#e6e6e6" stroke-width="0.25">10</text>
<text transform="translate(462.36,514) scale(0.97,1)" font-size="15.9" fill="#e6e6e6" text-anchor="middle" font-weight="normal" stroke="#e6e6e6" stroke-width="0.25">12</text>
<text transform="translate(505.453,514) scale(0.97,1)" font-size="15.9" fill="#e6e6e6" text-anchor="middle" font-weight="normal" stroke="#e6e6e6" stroke-width="0.25">14</text>
<text transform="translate(356,556.8) scale(1.0257,1)" font-size="30.2" fill="#f2f2f2" text-anchor="middle" font-weight="normal" stroke="#f2f2f2" stroke-width="0.45">Avg dE2000: 2.6</text>
<rect x="597.3" y="154.5" width="607.3" height="336.8" fill="#232323" />
<text transform="translate(887.2,148.8) scale(0.961,1)" font-size="15.2" fill="#e0e0e0" text-anchor="middle" font-weight="normal" stroke="#e0e0e0" stroke-width="0.3">RGB Balance</text>
<rect x="590.5" y="490.55" width="6.8" height="1.5" fill="#d8d8d8" />
<text transform="translate(590.2,496.6) scale(0.97,1)" font-size="15.9" fill="#e6e6e6" text-anchor="end" font-weight="normal" stroke="#e6e6e6" stroke-width="0.25">-40</text>
<rect x="597.3" y="448.75" width="607.3" height="1.5" fill="#9c9c9c" />
<rect x="590.5" y="448.75" width="6.8" height="1.5" fill="#d8d8d8" />
<text transform="translate(590.2,454.8) scale(0.97,1)" font-size="15.9" fill="#e6e6e6" text-anchor="end" font-weight="normal" stroke="#e6e6e6" stroke-width="0.25">-30</text>
<rect x="597.3" y="407.15" width="607.3" height="1.5" fill="#9c9c9c" />
<rect x="590.5" y="407.15" width="6.8" height="1.5" fill="#d8d8d8" />
<text transform="translate(590.2,413.2) scale(0.97,1)" font-size="15.9" fill="#e6e6e6" text-anchor="end" font-weight="normal" stroke="#e6e6e6" stroke-width="0.25">-20</text>
<rect x="597.3" y="365.15" width="607.3" height="1.5" fill="#9c9c9c" />
<rect x="590.5" y="365.15" width="6.8" height="1.5" fill="#d8d8d8" />
<text transform="translate(590.2,371.2) scale(0.97,1)" font-size="15.9" fill="#e6e6e6" text-anchor="end" font-weight="normal" stroke="#e6e6e6" stroke-width="0.25">-10</text>
<rect x="597.3" y="323.25" width="607.3" height="1.5" fill="#9c9c9c" />
<rect x="590.5" y="323.25" width="6.8" height="1.5" fill="#d8d8d8" />
<text transform="translate(590.2,329.3) scale(0.97,1)" font-size="15.9" fill="#e6e6e6" text-anchor="end" font-weight="normal" stroke="#e6e6e6" stroke-width="0.25">0</text>
<rect x="597.3" y="279.95" width="607.3" height="1.5" fill="#9c9c9c" />
<rect x="590.5" y="279.95" width="6.8" height="1.5" fill="#d8d8d8" />
<text transform="translate(590.2,286) scale(0.97,1)" font-size="15.9" fill="#e6e6e6" text-anchor="end" font-weight="normal" stroke="#e6e6e6" stroke-width="0.25">10</text>
<rect x="597.3" y="237.85" width="607.3" height="1.5" fill="#9c9c9c" />
<rect x="590.5" y="237.85" width="6.8" height="1.5" fill="#d8d8d8" />
<text transform="translate(590.2,243.9) scale(0.97,1)" font-size="15.9" fill="#e6e6e6" text-anchor="end" font-weight="normal" stroke="#e6e6e6" stroke-width="0.25">20</text>
<rect x="597.3" y="196.15" width="607.3" height="1.5" fill="#9c9c9c" />
<rect x="590.5" y="196.15" width="6.8" height="1.5" fill="#d8d8d8" />
<text transform="translate(590.2,202.2) scale(0.97,1)" font-size="15.9" fill="#e6e6e6" text-anchor="end" font-weight="normal" stroke="#e6e6e6" stroke-width="0.25">30</text>
<rect x="590.5" y="154.05" width="6.8" height="1.5" fill="#d8d8d8" />
<text transform="translate(590.2,160.1) scale(0.97,1)" font-size="15.9" fill="#e6e6e6" text-anchor="end" font-weight="normal" stroke="#e6e6e6" stroke-width="0.25">40</text>
<rect x="596.6" y="491.3" width="1.6" height="6.4" fill="#d8d8d8" />
<text transform="translate(597.4,514) scale(0.97,1)" font-size="15.9" fill="#e6e6e6" text-anchor="middle" font-weight="normal" stroke="#e6e6e6" stroke-width="0.25">0</text>
<rect x="657.24" y="491.3" width="1.6" height="6.4" fill="#d8d8d8" />
<text transform="translate(658.04,514) scale(0.97,1)" font-size="15.9" fill="#e6e6e6" text-anchor="middle" font-weight="normal" stroke="#e6e6e6" stroke-width="0.25">10</text>
<rect x="717.88" y="491.3" width="1.6" height="6.4" fill="#d8d8d8" />
<text transform="translate(718.68,514) scale(0.97,1)" font-size="15.9" fill="#e6e6e6" text-anchor="middle" font-weight="normal" stroke="#e6e6e6" stroke-width="0.25">20</text>
<rect x="778.52" y="491.3" width="1.6" height="6.4" fill="#d8d8d8" />
<text transform="translate(779.32,514) scale(0.97,1)" font-size="15.9" fill="#e6e6e6" text-anchor="middle" font-weight="normal" stroke="#e6e6e6" stroke-width="0.25">30</text>
<rect x="839.16" y="491.3" width="1.6" height="6.4" fill="#d8d8d8" />
<text transform="translate(839.96,514) scale(0.97,1)" font-size="15.9" fill="#e6e6e6" text-anchor="middle" font-weight="normal" stroke="#e6e6e6" stroke-width="0.25">40</text>
<rect x="899.8" y="491.3" width="1.6" height="6.4" fill="#d8d8d8" />
<text transform="translate(900.6,514) scale(0.97,1)" font-size="15.9" fill="#e6e6e6" text-anchor="middle" font-weight="normal" stroke="#e6e6e6" stroke-width="0.25">50</text>
<rect x="960.44" y="491.3" width="1.6" height="6.4" fill="#d8d8d8" />
<text transform="translate(961.24,514) scale(0.97,1)" font-size="15.9" fill="#e6e6e6" text-anchor="middle" font-weight="normal" stroke="#e6e6e6" stroke-width="0.25">60</text>
<rect x="1021.08" y="491.3" width="1.6" height="6.4" fill="#d8d8d8" />
<text transform="translate(1021.88,514) scale(0.97,1)" font-size="15.9" fill="#e6e6e6" text-anchor="middle" font-weight="normal" stroke="#e6e6e6" stroke-width="0.25">70</text>
<rect x="1081.72" y="491.3" width="1.6" height="6.4" fill="#d8d8d8" />
<text transform="translate(1082.52,514) scale(0.97,1)" font-size="15.9" fill="#e6e6e6" text-anchor="middle" font-weight="normal" stroke="#e6e6e6" stroke-width="0.25">80</text>
<rect x="1142.36" y="491.3" width="1.6" height="6.4" fill="#d8d8d8" />
<text transform="translate(1143.16,514) scale(0.97,1)" font-size="15.9" fill="#e6e6e6" text-anchor="middle" font-weight="normal" stroke="#e6e6e6" stroke-width="0.25">90</text>
<rect x="1203" y="491.3" width="1.6" height="6.4" fill="#d8d8d8" />
<text transform="translate(1203.8,514) scale(0.97,1)" font-size="15.9" fill="#e6e6e6" text-anchor="middle" font-weight="normal" stroke="#e6e6e6" stroke-width="0.25">100</text>
<rect x="597.3" y="154.9" width="607.3" height="336.40000000000003" fill="none" stroke="#9c9c9c" stroke-width="1.8"/>
<rect x="597.3" y="153" width="607.3" height="2.9" fill="#989898" />
<polyline points="597.4,314.7 658.0,316.9 718.7,324.2 779.3,327.2 840.0,327.5 900.6,323.5 961.2,326.7 1021.9,330 1082.5,325.8 1143.2,327.8 1203.8,327.2" fill="none" stroke="#ff0000" stroke-width="3.1" stroke-linejoin="round" clip-path="url(#qclip)"/>
<polyline points="597.4,312.5 658.0,318.3 718.7,324.5 779.3,324.7 840.0,320 900.6,320.2 961.2,324.2 1021.9,327.5 1082.5,323.7 1143.2,324.7 1203.8,324.2" fill="none" stroke="#008a00" stroke-width="3.1" stroke-linejoin="round" clip-path="url(#qclip)"/>
<polyline points="597.4,308 658.0,308.7 718.7,312.8 779.3,311.2 840.0,305.3 900.6,300.9 961.2,301.7 1021.9,297.5 1082.5,291.7 1143.2,292.7 1203.8,287.3" fill="none" stroke="#0000ff" stroke-width="3.1" stroke-linejoin="round" clip-path="url(#qclip)"/>
<text transform="translate(778.5,557) scale(0.9898,1)" font-size="30.2" fill="#f2f2f2" text-anchor="middle" font-weight="normal" stroke="#f2f2f2" stroke-width="0.45">Avg CCT: 6862</text>
<rect x="1269.2" y="154.2" width="138.1" height="343.2" fill="#232323" />
<text transform="translate(1323.7,148.8) scale(0.961,1)" font-size="15.2" fill="#e0e0e0" text-anchor="middle" font-weight="normal" stroke="#e0e0e0" stroke-width="0.3">RGB Balance</text>
<rect x="1262.4" y="496.65" width="6.8" height="1.5" fill="#d8d8d8" />
<text transform="translate(1262.2,502.7) scale(0.97,1)" font-size="15.9" fill="#e6e6e6" text-anchor="end" font-weight="normal" stroke="#e6e6e6" stroke-width="0.25">-10</text>
<rect x="1269.2" y="411.45" width="138.1" height="1.5" fill="#9c9c9c" />
<rect x="1262.4" y="411.45" width="6.8" height="1.5" fill="#d8d8d8" />
<text transform="translate(1262.2,417.5) scale(0.97,1)" font-size="15.9" fill="#e6e6e6" text-anchor="end" font-weight="normal" stroke="#e6e6e6" stroke-width="0.25">-5</text>
<rect x="1269.2" y="326.25" width="138.1" height="1.5" fill="#9c9c9c" />
<rect x="1262.4" y="326.25" width="6.8" height="1.5" fill="#d8d8d8" />
<text transform="translate(1262.2,332.3) scale(0.97,1)" font-size="15.9" fill="#e6e6e6" text-anchor="end" font-weight="normal" stroke="#e6e6e6" stroke-width="0.25">0</text>
<rect x="1269.2" y="240.25" width="138.1" height="1.5" fill="#9c9c9c" />
<rect x="1262.4" y="240.25" width="6.8" height="1.5" fill="#d8d8d8" />
<text transform="translate(1262.2,246.3) scale(0.97,1)" font-size="15.9" fill="#e6e6e6" text-anchor="end" font-weight="normal" stroke="#e6e6e6" stroke-width="0.25">5</text>
<rect x="1262.4" y="154.25" width="6.8" height="1.5" fill="#d8d8d8" />
<text transform="translate(1262.2,160.3) scale(0.97,1)" font-size="15.9" fill="#e6e6e6" text-anchor="end" font-weight="normal" stroke="#e6e6e6" stroke-width="0.25">10</text>
<rect x="1269.2" y="154.2" width="138.0999999999999" height="343.2" fill="none" stroke="#9c9c9c" stroke-width="1.7"/>
<rect x="1268.4" y="497.4" width="1.6" height="6.4" fill="#d8d8d8" />
<rect x="1406.5" y="497.4" width="1.6" height="6.4" fill="#d8d8d8" />
<text transform="translate(1337.2,514) scale(0.97,1)" font-size="15.9" fill="#e6e6e6" text-anchor="middle" font-weight="normal" stroke="#e6e6e6" stroke-width="0.25">100</text>
<rect x="1283.2" y="327.4" width="36.4" height="18.4" fill="url(#br)" stroke="#000" stroke-width="1.3"/>
<rect x="1320.2" y="327.4" width="36.6" height="6.4" fill="url(#bgn)" stroke="#000" stroke-width="1.3"/>
<rect x="1357.4" y="185.4" width="36.6" height="141" fill="url(#bb)" stroke="#000" stroke-width="1.3"/>
<text transform="translate(1221.5,557) scale(1.0524,1)" font-size="30.2" fill="#f2f2f2" text-anchor="middle" font-weight="normal" stroke="#f2f2f2" stroke-width="0.45">Contrast Ratio: 1207</text>
<rect x="1469.7" y="154.6" width="421.1" height="337" fill="#232323" />
<text transform="translate(1666.7,148.8) scale(1.0201,1)" font-size="15.2" fill="#e0e0e0" text-anchor="middle" font-weight="normal" stroke="#e0e0e0" stroke-width="0.3">Gamma Log/Log</text>
<rect x="1462.9" y="490.85" width="6.8" height="1.5" fill="#d8d8d8" />
<text transform="translate(1462.6,497.1) scale(0.97,1)" font-size="15.9" fill="#e6e6e6" text-anchor="end" font-weight="normal" stroke="#e6e6e6" stroke-width="0.25">1.8</text>
<rect x="1469.7" y="424.45" width="421.1" height="1.5" fill="#9c9c9c" />
<rect x="1462.9" y="424.45" width="6.8" height="1.5" fill="#d8d8d8" />
<text transform="translate(1462.6,430.7) scale(0.97,1)" font-size="15.9" fill="#e6e6e6" text-anchor="end" font-weight="normal" stroke="#e6e6e6" stroke-width="0.25">2</text>
<rect x="1469.7" y="356.25" width="421.1" height="1.5" fill="#9c9c9c" />
<rect x="1462.9" y="356.25" width="6.8" height="1.5" fill="#d8d8d8" />
<text transform="translate(1462.6,362.5) scale(0.97,1)" font-size="15.9" fill="#e6e6e6" text-anchor="end" font-weight="normal" stroke="#e6e6e6" stroke-width="0.25">2.2</text>
<rect x="1469.7" y="288.95" width="421.1" height="1.5" fill="#9c9c9c" />
<rect x="1462.9" y="288.95" width="6.8" height="1.5" fill="#d8d8d8" />
<text transform="translate(1462.6,295.2) scale(0.97,1)" font-size="15.9" fill="#e6e6e6" text-anchor="end" font-weight="normal" stroke="#e6e6e6" stroke-width="0.25">2.4</text>
<rect x="1469.7" y="222.25" width="421.1" height="1.5" fill="#9c9c9c" />
<rect x="1462.9" y="222.25" width="6.8" height="1.5" fill="#d8d8d8" />
<text transform="translate(1462.6,228.5) scale(0.97,1)" font-size="15.9" fill="#e6e6e6" text-anchor="end" font-weight="normal" stroke="#e6e6e6" stroke-width="0.25">2.6</text>
<rect x="1462.9" y="154.25" width="6.8" height="1.5" fill="#d8d8d8" />
<text transform="translate(1462.6,160.5) scale(0.97,1)" font-size="15.9" fill="#e6e6e6" text-anchor="end" font-weight="normal" stroke="#e6e6e6" stroke-width="0.25">2.8</text>
<rect x="1468.9" y="491.6" width="1.6" height="6.4" fill="#d8d8d8" />
<text transform="translate(1469.7,514) scale(0.97,1)" font-size="15.9" fill="#e6e6e6" text-anchor="middle" font-weight="normal" stroke="#e6e6e6" stroke-width="0.25">0</text>
<rect x="1553.12" y="491.6" width="1.6" height="6.4" fill="#d8d8d8" />
<text transform="translate(1553.92,514) scale(0.97,1)" font-size="15.9" fill="#e6e6e6" text-anchor="middle" font-weight="normal" stroke="#e6e6e6" stroke-width="0.25">20</text>
<rect x="1637.34" y="491.6" width="1.6" height="6.4" fill="#d8d8d8" />
<text transform="translate(1638.14,514) scale(0.97,1)" font-size="15.9" fill="#e6e6e6" text-anchor="middle" font-weight="normal" stroke="#e6e6e6" stroke-width="0.25">40</text>
<rect x="1721.56" y="491.6" width="1.6" height="6.4" fill="#d8d8d8" />
<text transform="translate(1722.36,514) scale(0.97,1)" font-size="15.9" fill="#e6e6e6" text-anchor="middle" font-weight="normal" stroke="#e6e6e6" stroke-width="0.25">60</text>
<rect x="1805.78" y="491.6" width="1.6" height="6.4" fill="#d8d8d8" />
<text transform="translate(1806.58,514) scale(0.97,1)" font-size="15.9" fill="#e6e6e6" text-anchor="middle" font-weight="normal" stroke="#e6e6e6" stroke-width="0.25">80</text>
<rect x="1890" y="491.6" width="1.6" height="6.4" fill="#d8d8d8" />
<text transform="translate(1890.8,514) scale(0.97,1)" font-size="15.9" fill="#e6e6e6" text-anchor="middle" font-weight="normal" stroke="#e6e6e6" stroke-width="0.25">100</text>
<polyline points="1469.7,667.6 1511.8,429.4 1553.9,382.5 1596.0,363.1 1638.1,357.9 1680.2,352.7 1722.4,342.1 1764.5,329.3 1806.6,337.5 1848.7,324.8 1890.8,331.6" fill="none" stroke="#969696" stroke-width="3" stroke-linejoin="round" clip-path="url(#gclip)"/>
<polyline points="1486.2,492 1491.5,469.7 1498.3,446.7 1505.1,432.3 1511,422.9 1518.7,412.7 1528,401.6 1541.6,390.1 1556.1,380.4 1575.7,371 1596.1,363.7 1616.5,358.3 1638.6,353.5 1664.1,348.9 1700,344.3 1721.3,341.6 1764.8,337.4 1808.3,334.2 1851.7,331.6 1890.9,329.6" fill="none" stroke="#ffff00" stroke-width="3.2" stroke-linejoin="round" clip-path="url(#gclip)"/>
<rect x="1469.7" y="154.6" width="421.0999999999999" height="337.0" fill="none" stroke="#9c9c9c" stroke-width="1.7"/>
<rect x="1469.7" y="153.2" width="421.1" height="2.9" fill="#989898" />
<text transform="translate(1666.5,557) scale(1.0435,1)" font-size="30.2" fill="#f2f2f2" text-anchor="middle" font-weight="normal" stroke="#f2f2f2" stroke-width="0.45">Average Gamma: 2.197</text>
<rect x="150" y="579.4" width="1770" height="138.2" fill="#000000" />
<rect x="275.7" y="586" width="127.4" height="107.4" fill="#000000" />
<rect x="275.7" y="586" width="127.4" height="54" fill="#040507" />
<rect x="275.9" y="586.3" width="127" height="106.9" fill="none" stroke="#f4f4f4" stroke-width="1.5"/>
<text transform="translate(339.4,709.1)" font-size="12.8" fill="#fff" text-anchor="middle" font-weight="normal" stroke="#fff" stroke-width="0.25">0</text>
<rect x="424.7" y="586" width="127.4" height="107.4" fill="#1b1b1b" />
<rect x="424.7" y="586" width="127.4" height="54" fill="#1c1c1d" />
<rect x="424.9" y="586.3" width="127" height="106.9" fill="none" stroke="#f4f4f4" stroke-width="1.5"/>
<text transform="translate(488.4,709.1)" font-size="12.8" fill="#fff" text-anchor="middle" font-weight="normal" stroke="#fff" stroke-width="0.25">10</text>
<rect x="573.7" y="586" width="127.4" height="107.4" fill="#333333" />
<rect x="573.7" y="586" width="127.4" height="54" fill="#343436" />
<rect x="573.9" y="586.3" width="127" height="106.9" fill="none" stroke="#f4f4f4" stroke-width="1.5"/>
<text transform="translate(637.4,709.1)" font-size="12.8" fill="#fff" text-anchor="middle" font-weight="normal" stroke="#fff" stroke-width="0.25">20</text>
<rect x="722.7" y="586" width="127.4" height="107.4" fill="#4c4c4c" />
<rect x="722.7" y="586" width="127.4" height="54" fill="#4d4d4f" />
<rect x="722.9" y="586.3" width="127" height="106.9" fill="none" stroke="#f4f4f4" stroke-width="1.5"/>
<text transform="translate(786.4,709.1)" font-size="12.8" fill="#fff" text-anchor="middle" font-weight="normal" stroke="#fff" stroke-width="0.25">30</text>
<rect x="871.7" y="586" width="127.4" height="107.4" fill="#666666" />
<rect x="871.7" y="586" width="127.4" height="54" fill="#67676a" />
<rect x="871.9" y="586.3" width="127" height="106.9" fill="none" stroke="#f4f4f4" stroke-width="1.5"/>
<text transform="translate(935.4,709.1)" font-size="12.8" fill="#fff" text-anchor="middle" font-weight="normal" stroke="#fff" stroke-width="0.25">40</text>
<rect x="1020.7" y="586" width="127.4" height="107.4" fill="#808080" />
<rect x="1020.7" y="586" width="127.4" height="54" fill="#818184" />
<rect x="1020.9" y="586.3" width="127" height="106.9" fill="none" stroke="#f4f4f4" stroke-width="1.5"/>
<text transform="translate(1084.4,709.1)" font-size="12.8" fill="#fff" text-anchor="middle" font-weight="normal" stroke="#fff" stroke-width="0.25">50</text>
<rect x="1169.7" y="586" width="127.4" height="107.4" fill="#999999" />
<rect x="1169.7" y="586" width="127.4" height="54" fill="#9a9a9e" />
<rect x="1169.9" y="586.3" width="127" height="106.9" fill="none" stroke="#f4f4f4" stroke-width="1.5"/>
<text transform="translate(1233.4,709.1)" font-size="12.8" fill="#fff" text-anchor="middle" font-weight="normal" stroke="#fff" stroke-width="0.25">60</text>
<rect x="1318.7" y="586" width="127.4" height="107.4" fill="#b3b3b3" />
<rect x="1318.7" y="586" width="127.4" height="54" fill="#b1b1b6" />
<rect x="1318.9" y="586.3" width="127" height="106.9" fill="none" stroke="#f4f4f4" stroke-width="1.5"/>
<text transform="translate(1382.4,709.1)" font-size="12.8" fill="#fff" text-anchor="middle" font-weight="normal" stroke="#fff" stroke-width="0.25">70</text>
<rect x="1467.7" y="586" width="127.4" height="107.4" fill="#cccccc" />
<rect x="1467.7" y="586" width="127.4" height="54" fill="#cacad3" />
<rect x="1467.9" y="586.3" width="127" height="106.9" fill="none" stroke="#f4f4f4" stroke-width="1.5"/>
<text transform="translate(1531.4,709.1)" font-size="12.8" fill="#fff" text-anchor="middle" font-weight="normal" stroke="#fff" stroke-width="0.25">80</text>
<rect x="1616.7" y="586" width="127.4" height="107.4" fill="#e5e5e5" />
<rect x="1616.7" y="586" width="127.4" height="54" fill="#e3e3ed" />
<rect x="1616.9" y="586.3" width="127" height="106.9" fill="none" stroke="#f4f4f4" stroke-width="1.5"/>
<text transform="translate(1680.4,709.1)" font-size="12.8" fill="#fff" text-anchor="middle" font-weight="normal" stroke="#fff" stroke-width="0.25">90</text>
<rect x="1765.7" y="586" width="127.4" height="107.4" fill="#f7f7f7" />
<rect x="1765.7" y="586" width="127.4" height="54" fill="#f6f6ff" />
<rect x="1765.9" y="586.3" width="127" height="106.9" fill="none" stroke="#f4f4f4" stroke-width="1.5"/>
<text transform="translate(1829.4,709.1)" font-size="12.8" fill="#fff" text-anchor="middle" font-weight="normal" stroke="#fff" stroke-width="0.25">100</text>
<text transform="translate(266.2,609.6) rotate(-90) scale(0.915,1)" font-size="14" fill="#fff" stroke="#fff" stroke-width="0.3" text-anchor="middle">Actual</text>
<text transform="translate(266.2,670.3) rotate(-90) scale(0.905,1)" font-size="14" fill="#fff" stroke="#fff" stroke-width="0.3" text-anchor="middle">Target</text>
<text transform="translate(172.8,789) scale(1.031,1)" font-size="30.6" fill="#f2f2f2" text-anchor="start" font-weight="normal" stroke="#f2f2f2" stroke-width="0.45">Current Reading</text>
<text transform="translate(172.6,834) scale(1.0221,1)" font-size="25.8" fill="#f2f2f2" text-anchor="start" font-weight="normal" stroke="#f2f2f2" stroke-width="0.45">x: 0.3075</text>
<text transform="translate(331.6,834) scale(1.024,1)" font-size="25.8" fill="#f2f2f2" text-anchor="start" font-weight="normal" stroke="#f2f2f2" stroke-width="0.45">y: 0.321</text>
<text transform="translate(172.6,870.4) scale(1.0442,1)" font-size="25.8" fill="#f2f2f2" text-anchor="start" font-weight="normal" stroke="#f2f2f2" stroke-width="0.45">u': 0.1972</text>
<text transform="translate(331.6,870.4) scale(1.0371,1)" font-size="25.8" fill="#f2f2f2" text-anchor="start" font-weight="normal" stroke="#f2f2f2" stroke-width="0.45">v': 0.4632</text>
<text transform="translate(172.6,906.6) scale(1.0673,1)" font-size="25.8" fill="#f2f2f2" text-anchor="start" font-weight="normal" stroke="#f2f2f2" stroke-width="0.45">cd/m²: 473.8147</text>
<text transform="translate(172.6,943) scale(1.0115,1)" font-size="25.8" fill="#f2f2f2" text-anchor="start" font-weight="normal" stroke="#f2f2f2" stroke-width="0.45">ΔE 2000: 4.11</text>
<text transform="translate(653,752.8) scale(0.9662,1)" font-size="15.2" fill="#e0e0e0" text-anchor="middle" font-weight="normal" stroke="#e0e0e0" stroke-width="0.3">CIE 1931 xy</text>
<g clip-path="url(#cclip)"><g filter="url(#vblur)"><rect x="524.8" y="731.64" width="291.6" height="9.42" fill="url(#cr0)"/><rect x="524.8" y="740.46" width="291.6" height="9.42" fill="url(#cr1)"/><rect x="524.8" y="749.28" width="291.6" height="9.42" fill="url(#cr2)"/><rect x="524.8" y="758.10" width="291.6" height="9.42" fill="url(#cr3)"/><rect x="524.8" y="766.92" width="291.6" height="9.42" fill="url(#cr4)"/><rect x="524.8" y="775.74" width="291.6" height="9.42" fill="url(#cr5)"/><rect x="524.8" y="784.56" width="291.6" height="9.42" fill="url(#cr6)"/><rect x="524.8" y="793.38" width="291.6" height="9.42" fill="url(#cr7)"/><rect x="524.8" y="802.20" width="291.6" height="9.42" fill="url(#cr8)"/><rect x="524.8" y="811.02" width="291.6" height="9.42" fill="url(#cr9)"/><rect x="524.8" y="819.84" width="291.6" height="9.42" fill="url(#cr10)"/><rect x="524.8" y="828.66" width="291.6" height="9.42" fill="url(#cr11)"/><rect x="524.8" y="837.48" width="291.6" height="9.42" fill="url(#cr12)"/><rect x="524.8" y="846.30" width="291.6" height="9.42" fill="url(#cr13)"/><rect x="524.8" y="855.12" width="291.6" height="9.42" fill="url(#cr14)"/><rect x="524.8" y="863.94" width="291.6" height="9.42" fill="url(#cr15)"/><rect x="524.8" y="872.76" width="291.6" height="9.42" fill="url(#cr16)"/><rect x="524.8" y="881.58" width="291.6" height="9.42" fill="url(#cr17)"/><rect x="524.8" y="890.40" width="291.6" height="9.42" fill="url(#cr18)"/><rect x="524.8" y="899.22" width="291.6" height="9.42" fill="url(#cr19)"/><rect x="524.8" y="908.04" width="291.6" height="9.42" fill="url(#cr20)"/><rect x="524.8" y="916.86" width="291.6" height="9.42" fill="url(#cr21)"/><rect x="524.8" y="925.68" width="291.6" height="9.42" fill="url(#cr22)"/><rect x="524.8" y="934.50" width="291.6" height="9.42" fill="url(#cr23)"/><rect x="524.8" y="943.32" width="291.6" height="9.42" fill="url(#cr24)"/><rect x="524.8" y="952.14" width="291.6" height="9.42" fill="url(#cr25)"/></g></g>
<polyline points="560,944.4 572,935.2 584,926.1 596,917.2 608,908.4 620,899.8 632,891.4 644,883.1 656,875.0 668,867.0 680,859.2 692,851.5 704,844.0 716,836.6 728,829.4 740,822.3 752,815.4 764,808.6 776,802.0 788,795.6 800,789.3 812,783.1 824,777.1" fill="none" stroke="#000" stroke-width="3.3" clip-path="url(#cclip)"/>
<rect x="536.8" y="758.4" width="267.6" height="176.39999999999998" fill="none" stroke="#9a9a9a" stroke-width="1.8"/>
<rect x="530.2" y="808.85" width="6" height="1.5" fill="#d8d8d8" />
<text transform="translate(530.4,814.9) scale(0.97,1)" font-size="15.9" fill="#e6e6e6" text-anchor="end" font-weight="normal" stroke="#e6e6e6" stroke-width="0.25">0.34</text>
<rect x="530.2" y="880.35" width="6" height="1.5" fill="#d8d8d8" />
<text transform="translate(530.4,886.4) scale(0.97,1)" font-size="15.9" fill="#e6e6e6" text-anchor="end" font-weight="normal" stroke="#e6e6e6" stroke-width="0.25">0.32</text>
<rect x="548.3" y="934.8" width="1.6" height="6.4" fill="#d8d8d8" />
<text transform="translate(549.1,957.4) scale(0.97,1)" font-size="15.9" fill="#e6e6e6" text-anchor="middle" font-weight="normal" stroke="#e6e6e6" stroke-width="0.25">0.29</text>
<rect x="601.8" y="934.8" width="1.6" height="6.4" fill="#d8d8d8" />
<text transform="translate(602.6,957.4) scale(0.97,1)" font-size="15.9" fill="#e6e6e6" text-anchor="middle" font-weight="normal" stroke="#e6e6e6" stroke-width="0.25">0.3</text>
<rect x="655.1" y="934.8" width="1.6" height="6.4" fill="#d8d8d8" />
<text transform="translate(655.9,957.4) scale(0.97,1)" font-size="15.9" fill="#e6e6e6" text-anchor="middle" font-weight="normal" stroke="#e6e6e6" stroke-width="0.25">0.31</text>
<rect x="708.5" y="934.8" width="1.6" height="6.4" fill="#d8d8d8" />
<text transform="translate(709.3,957.4) scale(0.97,1)" font-size="15.9" fill="#e6e6e6" text-anchor="middle" font-weight="normal" stroke="#e6e6e6" stroke-width="0.25">0.32</text>
<rect x="761.9" y="934.8" width="1.6" height="6.4" fill="#d8d8d8" />
<text transform="translate(762.7,957.4) scale(0.97,1)" font-size="15.9" fill="#e6e6e6" text-anchor="middle" font-weight="normal" stroke="#e6e6e6" stroke-width="0.25">0.33</text>
<rect x="662.9" y="838.1" width="14.2" height="14.2" fill="#fff" stroke="#000" stroke-width="1.9"/>
<circle cx="643.1" cy="881.4" r="4.1" fill="#222" stroke="#000" stroke-width="1.3"/>
<circle cx="639.2" cy="867.8" r="4.1" fill="#666" stroke="#000" stroke-width="1.3"/>
<circle cx="646.8" cy="869.8" r="4.1" fill="#aaa" stroke="#000" stroke-width="1.3"/>
<circle cx="644.6" cy="872.4" r="4.1" fill="#ccc" stroke="#000" stroke-width="1.3"/>
<circle cx="637.6" cy="875.4" r="4.1" fill="#ddd" stroke="#000" stroke-width="1.3"/>
<circle cx="640.2" cy="877" r="4.1" fill="#bbb" stroke="#000" stroke-width="1.3"/>
<circle cx="642.8" cy="874.3" r="4.1" fill="#fff" stroke="#000" stroke-width="1.3"/>
<rect x="815.4" y="728.4" width="1096" height="243" fill="none" stroke="#f0f0f0" stroke-width="1.5" stroke-dasharray="1.9 2.85"/>
<rect x="816.4" y="729.8" width="908.2" height="25" fill="url(#th)" />
<rect x="816.4" y="729.8" width="11" height="25" fill="#000" />
<text transform="translate(941.2,747.8) scale(0.9069,1)" font-size="14" fill="#fff" text-anchor="start" font-weight="normal" >0</text>
<text transform="translate(1019.4,747.8) scale(0.9069,1)" font-size="14" fill="#fff" text-anchor="start" font-weight="normal" >10</text>
<text transform="translate(1090.4,747.8) scale(0.9069,1)" font-size="14" fill="#fff" text-anchor="start" font-weight="normal" >20</text>
<text transform="translate(1161.3,747.8) scale(0.9069,1)" font-size="14" fill="#fff" text-anchor="start" font-weight="normal" >30</text>
<text transform="translate(1232.1,747.8) scale(0.9069,1)" font-size="14" fill="#fff" text-anchor="start" font-weight="normal" >40</text>
<text transform="translate(1302.9,747.8) scale(0.9069,1)" font-size="14" fill="#fff" text-anchor="start" font-weight="normal" >50</text>
<text transform="translate(1373.9,747.8) scale(0.9069,1)" font-size="14" fill="#fff" text-anchor="start" font-weight="normal" >60</text>
<text transform="translate(1444.7,747.8) scale(0.9069,1)" font-size="14" fill="#fff" text-anchor="start" font-weight="normal" >70</text>
<text transform="translate(1515.6,747.8) scale(0.9069,1)" font-size="14" fill="#fff" text-anchor="start" font-weight="normal" >80</text>
<text transform="translate(1586.5,747.8) scale(0.9069,1)" font-size="14" fill="#fff" text-anchor="start" font-weight="normal" >90</text>
<text transform="translate(1657.4,747.8) scale(0.9069,1)" font-size="14" fill="#fff" text-anchor="start" font-weight="normal" >100</text>
<rect x="816.4" y="754.8" width="908.2" height="24.6" fill="#444444" />
<rect x="816.4" y="754.8" width="11" height="24.6" fill="#2a2a2a" />
<text transform="translate(830.8,772.8) scale(0.8105,1)" font-size="14.8" fill="#f4f4f4" text-anchor="start" font-weight="normal" stroke="#f4f4f4" stroke-width="0.2">x: CIE31</text>
<text transform="translate(941.2,772.8) scale(0.8836,1)" font-size="14.8" fill="#f4f4f4" text-anchor="start" font-weight="normal" stroke="#f4f4f4" stroke-width="0.2">0.2772</text>
<text transform="translate(1019.4,772.8) scale(0.8836,1)" font-size="14.8" fill="#f4f4f4" text-anchor="start" font-weight="normal" stroke="#f4f4f4" stroke-width="0.2">0.3077</text>
<text transform="translate(1090.4,772.8) scale(0.8836,1)" font-size="14.8" fill="#f4f4f4" text-anchor="start" font-weight="normal" stroke="#f4f4f4" stroke-width="0.2">0.3082</text>
<text transform="translate(1161.3,772.8) scale(0.8836,1)" font-size="14.8" fill="#f4f4f4" text-anchor="start" font-weight="normal" stroke="#f4f4f4" stroke-width="0.2">0.3078</text>
<text transform="translate(1232.1,772.8) scale(0.8836,1)" font-size="14.8" fill="#f4f4f4" text-anchor="start" font-weight="normal" stroke="#f4f4f4" stroke-width="0.2">0.3071</text>
<text transform="translate(1302.9,772.8) scale(0.8836,1)" font-size="14.8" fill="#f4f4f4" text-anchor="start" font-weight="normal" stroke="#f4f4f4" stroke-width="0.2">0.3079</text>
<text transform="translate(1373.9,772.8) scale(0.8836,1)" font-size="14.8" fill="#f4f4f4" text-anchor="start" font-weight="normal" stroke="#f4f4f4" stroke-width="0.2">0.3081</text>
<text transform="translate(1444.7,772.8) scale(0.8836,1)" font-size="14.8" fill="#f4f4f4" text-anchor="start" font-weight="normal" stroke="#f4f4f4" stroke-width="0.2">0.3072</text>
<text transform="translate(1515.6,772.8) scale(0.8836,1)" font-size="14.8" fill="#f4f4f4" text-anchor="start" font-weight="normal" stroke="#f4f4f4" stroke-width="0.2">0.3076</text>
<text transform="translate(1586.5,772.8) scale(0.8836,1)" font-size="14.8" fill="#f4f4f4" text-anchor="start" font-weight="normal" stroke="#f4f4f4" stroke-width="0.2">0.3078</text>
<text transform="translate(1657.4,772.8) scale(0.8836,1)" font-size="14.8" fill="#f4f4f4" text-anchor="start" font-weight="normal" stroke="#f4f4f4" stroke-width="0.2">0.3075</text>
<rect x="816.4" y="779.4" width="908.2" height="24.9" fill="#808080" />
<rect x="816.4" y="779.4" width="11" height="24.9" fill="#3a3a3a" />
<text transform="translate(830.8,797.4) scale(0.8105,1)" font-size="14.8" fill="#f4f4f4" text-anchor="start" font-weight="normal" stroke="#f4f4f4" stroke-width="0.2">y: CIE31</text>
<text transform="translate(941.2,797.4) scale(0.8836,1)" font-size="14.8" fill="#f4f4f4" text-anchor="start" font-weight="normal" stroke="#f4f4f4" stroke-width="0.2">0.2848</text>
<text transform="translate(1019.4,797.4) scale(0.8836,1)" font-size="14.8" fill="#f4f4f4" text-anchor="start" font-weight="normal" stroke="#f4f4f4" stroke-width="0.2">0.3195</text>
<text transform="translate(1090.4,797.4) scale(0.8836,1)" font-size="14.8" fill="#f4f4f4" text-anchor="start" font-weight="normal" stroke="#f4f4f4" stroke-width="0.2">0.3212</text>
<text transform="translate(1161.3,797.4) scale(0.8836,1)" font-size="14.8" fill="#f4f4f4" text-anchor="start" font-weight="normal" stroke="#f4f4f4" stroke-width="0.2">0.3215</text>
<text transform="translate(1232.1,797.4) scale(0.8836,1)" font-size="14.8" fill="#f4f4f4" text-anchor="start" font-weight="normal" stroke="#f4f4f4" stroke-width="0.2">0.3227</text>
<text transform="translate(1302.9,797.4) scale(0.8836,1)" font-size="14.8" fill="#f4f4f4" text-anchor="start" font-weight="normal" stroke="#f4f4f4" stroke-width="0.2">0.3220</text>
<text transform="translate(1373.9,797.4) scale(0.8836,1)" font-size="14.8" fill="#f4f4f4" text-anchor="start" font-weight="normal" stroke="#f4f4f4" stroke-width="0.2">0.3220</text>
<text transform="translate(1444.7,797.4) scale(0.8836,1)" font-size="14.8" fill="#f4f4f4" text-anchor="start" font-weight="normal" stroke="#f4f4f4" stroke-width="0.2">0.3205</text>
<text transform="translate(1515.6,797.4) scale(0.8836,1)" font-size="14.8" fill="#f4f4f4" text-anchor="start" font-weight="normal" stroke="#f4f4f4" stroke-width="0.2">0.3208</text>
<text transform="translate(1586.5,797.4) scale(0.8836,1)" font-size="14.8" fill="#f4f4f4" text-anchor="start" font-weight="normal" stroke="#f4f4f4" stroke-width="0.2">0.3215</text>
<text transform="translate(1657.4,797.4) scale(0.8836,1)" font-size="14.8" fill="#f4f4f4" text-anchor="start" font-weight="normal" stroke="#f4f4f4" stroke-width="0.2">0.3210</text>
<rect x="816.4" y="804.3" width="908.2" height="24.7" fill="#444444" />
<rect x="816.4" y="804.3" width="11" height="24.7" fill="#2a2a2a" />
<text transform="translate(830.8,822.3) scale(0.7597,1)" font-size="14.8" fill="#f4f4f4" text-anchor="start" font-weight="normal" stroke="#f4f4f4" stroke-width="0.2">Y</text>
<text transform="translate(941.2,822.3) scale(0.8836,1)" font-size="14.8" fill="#f4f4f4" text-anchor="start" font-weight="normal" stroke="#f4f4f4" stroke-width="0.2">0.3927</text>
<text transform="translate(1019.4,822.3) scale(0.8836,1)" font-size="14.8" fill="#f4f4f4" text-anchor="start" font-weight="normal" stroke="#f4f4f4" stroke-width="0.2">5.1006</text>
<text transform="translate(1090.4,822.3) scale(0.8837,1)" font-size="14.8" fill="#f4f4f4" text-anchor="start" font-weight="normal" stroke="#f4f4f4" stroke-width="0.2">15.5328</text>
<text transform="translate(1161.3,822.3) scale(0.8837,1)" font-size="14.8" fill="#f4f4f4" text-anchor="start" font-weight="normal" stroke="#f4f4f4" stroke-width="0.2">33.7978</text>
<text transform="translate(1232.1,822.3) scale(0.8837,1)" font-size="14.8" fill="#f4f4f4" text-anchor="start" font-weight="normal" stroke="#f4f4f4" stroke-width="0.2">63.3077</text>
<text transform="translate(1302.9,822.3) scale(0.8838,1)" font-size="14.8" fill="#f4f4f4" text-anchor="start" font-weight="normal" stroke="#f4f4f4" stroke-width="0.2">103.1336</text>
<text transform="translate(1373.9,822.3) scale(0.8838,1)" font-size="14.8" fill="#f4f4f4" text-anchor="start" font-weight="normal" stroke="#f4f4f4" stroke-width="0.2">150.6160</text>
<text transform="translate(1444.7,822.3) scale(0.8838,1)" font-size="14.8" fill="#f4f4f4" text-anchor="start" font-weight="normal" stroke="#f4f4f4" stroke-width="0.2">208.6520</text>
<text transform="translate(1515.6,822.3) scale(0.8838,1)" font-size="14.8" fill="#f4f4f4" text-anchor="start" font-weight="normal" stroke="#f4f4f4" stroke-width="0.2">286.3221</text>
<text transform="translate(1586.5,822.3) scale(0.8838,1)" font-size="14.8" fill="#f4f4f4" text-anchor="start" font-weight="normal" stroke="#f4f4f4" stroke-width="0.2">373.9064</text>
<text transform="translate(1657.4,822.3) scale(0.8838,1)" font-size="14.8" fill="#f4f4f4" text-anchor="start" font-weight="normal" stroke="#f4f4f4" stroke-width="0.2">473.8147</text>
<rect x="816.4" y="829" width="908.2" height="24.6" fill="#808080" />
<rect x="816.4" y="829" width="11" height="24.6" fill="#3a3a3a" />
<text transform="translate(830.8,847) scale(0.886,1)" font-size="14.8" fill="#f4f4f4" text-anchor="start" font-weight="normal" stroke="#f4f4f4" stroke-width="0.2">Target Y</text>
<text transform="translate(941.2,847) scale(0.8836,1)" font-size="14.8" fill="#f4f4f4" text-anchor="start" font-weight="normal" stroke="#f4f4f4" stroke-width="0.2">0.0000</text>
<text transform="translate(1019.4,847) scale(0.8836,1)" font-size="14.8" fill="#f4f4f4" text-anchor="start" font-weight="normal" stroke="#f4f4f4" stroke-width="0.2">4.8944</text>
<text transform="translate(1090.4,847) scale(0.8837,1)" font-size="14.8" fill="#f4f4f4" text-anchor="start" font-weight="normal" stroke="#f4f4f4" stroke-width="0.2">15.6855</text>
<text transform="translate(1161.3,847) scale(0.8837,1)" font-size="14.8" fill="#f4f4f4" text-anchor="start" font-weight="normal" stroke="#f4f4f4" stroke-width="0.2">34.2435</text>
<text transform="translate(1232.1,847) scale(0.8837,1)" font-size="14.8" fill="#f4f4f4" text-anchor="start" font-weight="normal" stroke="#f4f4f4" stroke-width="0.2">62.9550</text>
<rect x="1300" y="829.6" width="69.6" height="23.4" fill="#f4f4f4" />
<text transform="translate(1303.9,847) scale(0.8838,1)" font-size="14.8" fill="#000" text-anchor="start" font-weight="normal" >102.2779</text>
<text transform="translate(1373.9,847) scale(0.8838,1)" font-size="14.8" fill="#f4f4f4" text-anchor="start" font-weight="normal" stroke="#f4f4f4" stroke-width="0.2">150.9321</text>
<text transform="translate(1444.7,847) scale(0.8838,1)" font-size="14.8" fill="#f4f4f4" text-anchor="start" font-weight="normal" stroke="#f4f4f4" stroke-width="0.2">210.9429</text>
<text transform="translate(1515.6,847) scale(0.8838,1)" font-size="14.8" fill="#f4f4f4" text-anchor="start" font-weight="normal" stroke="#f4f4f4" stroke-width="0.2">286.1023</text>
<text transform="translate(1586.5,847) scale(0.8838,1)" font-size="14.8" fill="#f4f4f4" text-anchor="start" font-weight="normal" stroke="#f4f4f4" stroke-width="0.2">374.9286</text>
<text transform="translate(1657.4,847) scale(0.8838,1)" font-size="14.8" fill="#f4f4f4" text-anchor="start" font-weight="normal" stroke="#f4f4f4" stroke-width="0.2">473.8147</text>
<rect x="816.4" y="853.6" width="908.2" height="24.6" fill="#444444" />
<rect x="816.4" y="853.6" width="11" height="24.6" fill="#2a2a2a" />
<text transform="translate(830.8,871.6) scale(0.9207,1)" font-size="14.8" fill="#f4f4f4" text-anchor="start" font-weight="normal" stroke="#f4f4f4" stroke-width="0.2">Gamma Log/Log</text>
<text transform="translate(941.2,871.6) scale(0.8836,1)" font-size="14.8" fill="#f4f4f4" text-anchor="start" font-weight="normal" stroke="#f4f4f4" stroke-width="0.2">1.2778</text>
<text transform="translate(1019.4,871.6) scale(0.8836,1)" font-size="14.8" fill="#f4f4f4" text-anchor="start" font-weight="normal" stroke="#f4f4f4" stroke-width="0.2">1.9847</text>
<text transform="translate(1090.4,871.6) scale(0.8836,1)" font-size="14.8" fill="#f4f4f4" text-anchor="start" font-weight="normal" stroke="#f4f4f4" stroke-width="0.2">2.1236</text>
<text transform="translate(1161.3,871.6) scale(0.8836,1)" font-size="14.8" fill="#f4f4f4" text-anchor="start" font-weight="normal" stroke="#f4f4f4" stroke-width="0.2">2.1812</text>
<text transform="translate(1232.1,871.6) scale(0.8836,1)" font-size="14.8" fill="#f4f4f4" text-anchor="start" font-weight="normal" stroke="#f4f4f4" stroke-width="0.2">2.1967</text>
<text transform="translate(1302.9,871.6) scale(0.8836,1)" font-size="14.8" fill="#f4f4f4" text-anchor="start" font-weight="normal" stroke="#f4f4f4" stroke-width="0.2">2.2123</text>
<text transform="translate(1373.9,871.6) scale(0.8836,1)" font-size="14.8" fill="#f4f4f4" text-anchor="start" font-weight="normal" stroke="#f4f4f4" stroke-width="0.2">2.2436</text>
<text transform="translate(1444.7,871.6) scale(0.8836,1)" font-size="14.8" fill="#f4f4f4" text-anchor="start" font-weight="normal" stroke="#f4f4f4" stroke-width="0.2">2.2815</text>
<text transform="translate(1515.6,871.6) scale(0.8836,1)" font-size="14.8" fill="#f4f4f4" text-anchor="start" font-weight="normal" stroke="#f4f4f4" stroke-width="0.2">2.2573</text>
<text transform="translate(1586.5,871.6) scale(0.8836,1)" font-size="14.8" fill="#f4f4f4" text-anchor="start" font-weight="normal" stroke="#f4f4f4" stroke-width="0.2">2.2950</text>
<text transform="translate(1657.4,871.6) scale(0.8836,1)" font-size="14.8" fill="#f4f4f4" text-anchor="start" font-weight="normal" stroke="#f4f4f4" stroke-width="0.2">2.2749</text>
<rect x="816.4" y="878.2" width="908.2" height="24.7" fill="#808080" />
<rect x="816.4" y="878.2" width="11" height="24.7" fill="#3a3a3a" />
<text transform="translate(830.8,896.2) scale(0.7627,1)" font-size="14.8" fill="#f4f4f4" text-anchor="start" font-weight="normal" stroke="#f4f4f4" stroke-width="0.2">CCT</text>
<text transform="translate(941.2,896.2) scale(0.884,1)" font-size="14.8" fill="#f4f4f4" text-anchor="start" font-weight="normal" stroke="#f4f4f4" stroke-width="0.2">10478.0000</text>
<text transform="translate(1019.4,896.2) scale(0.8839,1)" font-size="14.8" fill="#f4f4f4" text-anchor="start" font-weight="normal" stroke="#f4f4f4" stroke-width="0.2">6883.0000</text>
<text transform="translate(1090.4,896.2) scale(0.8839,1)" font-size="14.8" fill="#f4f4f4" text-anchor="start" font-weight="normal" stroke="#f4f4f4" stroke-width="0.2">6829.0000</text>
<text transform="translate(1161.3,896.2) scale(0.8839,1)" font-size="14.8" fill="#f4f4f4" text-anchor="start" font-weight="normal" stroke="#f4f4f4" stroke-width="0.2">6851.0000</text>
<text transform="translate(1232.1,896.2) scale(0.8839,1)" font-size="14.8" fill="#f4f4f4" text-anchor="start" font-weight="normal" stroke="#f4f4f4" stroke-width="0.2">6884.0000</text>
<text transform="translate(1302.9,896.2) scale(0.8839,1)" font-size="14.8" fill="#f4f4f4" text-anchor="start" font-weight="normal" stroke="#f4f4f4" stroke-width="0.2">6843.0000</text>
<text transform="translate(1373.9,896.2) scale(0.8839,1)" font-size="14.8" fill="#f4f4f4" text-anchor="start" font-weight="normal" stroke="#f4f4f4" stroke-width="0.2">6830.0000</text>
<text transform="translate(1444.7,896.2) scale(0.8839,1)" font-size="14.8" fill="#f4f4f4" text-anchor="start" font-weight="normal" stroke="#f4f4f4" stroke-width="0.2">6902.0000</text>
<text transform="translate(1515.6,896.2) scale(0.8839,1)" font-size="14.8" fill="#f4f4f4" text-anchor="start" font-weight="normal" stroke="#f4f4f4" stroke-width="0.2">6874.0000</text>
<text transform="translate(1586.5,896.2) scale(0.8839,1)" font-size="14.8" fill="#f4f4f4" text-anchor="start" font-weight="normal" stroke="#f4f4f4" stroke-width="0.2">6854.0000</text>
<text transform="translate(1657.4,896.2) scale(0.8839,1)" font-size="14.8" fill="#f4f4f4" text-anchor="start" font-weight="normal" stroke="#f4f4f4" stroke-width="0.2">6874.0000</text>
<rect x="816.4" y="902.9" width="908.2" height="24.5" fill="#444444" />
<rect x="816.4" y="902.9" width="11" height="24.5" fill="#2a2a2a" />
<text transform="translate(830.8,920.9) scale(0.8663,1)" font-size="14.8" fill="#f4f4f4" text-anchor="start" font-weight="normal" stroke="#f4f4f4" stroke-width="0.2">ΔE 2000</text>
<text transform="translate(941.2,920.9) scale(0.8836,1)" font-size="14.8" fill="#f4f4f4" text-anchor="start" font-weight="normal" stroke="#f4f4f4" stroke-width="0.2">0.6892</text>
<text transform="translate(1019.4,920.9) scale(0.8836,1)" font-size="14.8" fill="#f4f4f4" text-anchor="start" font-weight="normal" stroke="#f4f4f4" stroke-width="0.2">1.2473</text>
<text transform="translate(1090.4,920.9) scale(0.8836,1)" font-size="14.8" fill="#f4f4f4" text-anchor="start" font-weight="normal" stroke="#f4f4f4" stroke-width="0.2">1.4132</text>
<text transform="translate(1161.3,920.9) scale(0.8836,1)" font-size="14.8" fill="#f4f4f4" text-anchor="start" font-weight="normal" stroke="#f4f4f4" stroke-width="0.2">1.6943</text>
<text transform="translate(1232.1,920.9) scale(0.8836,1)" font-size="14.8" fill="#f4f4f4" text-anchor="start" font-weight="normal" stroke="#f4f4f4" stroke-width="0.2">1.7274</text>
<text transform="translate(1302.9,920.9) scale(0.8836,1)" font-size="14.8" fill="#f4f4f4" text-anchor="start" font-weight="normal" stroke="#f4f4f4" stroke-width="0.2">2.2416</text>
<text transform="translate(1373.9,920.9) scale(0.8836,1)" font-size="14.8" fill="#f4f4f4" text-anchor="start" font-weight="normal" stroke="#f4f4f4" stroke-width="0.2">2.5303</text>
<text transform="translate(1444.7,920.9) scale(0.8836,1)" font-size="14.8" fill="#f4f4f4" text-anchor="start" font-weight="normal" stroke="#f4f4f4" stroke-width="0.2">3.3951</text>
<text transform="translate(1515.6,920.9) scale(0.8836,1)" font-size="14.8" fill="#f4f4f4" text-anchor="start" font-weight="normal" stroke="#f4f4f4" stroke-width="0.2">3.6386</text>
<text transform="translate(1586.5,920.9) scale(0.8836,1)" font-size="14.8" fill="#f4f4f4" text-anchor="start" font-weight="normal" stroke="#f4f4f4" stroke-width="0.2">3.6325</text>
<text transform="translate(1657.4,920.9) scale(0.8836,1)" font-size="14.8" fill="#f4f4f4" text-anchor="start" font-weight="normal" stroke="#f4f4f4" stroke-width="0.2">4.1056</text>
<rect x="816.4" y="927.4" width="908.2" height="24.8" fill="#808080" />
<rect x="816.4" y="927.4" width="11" height="24.8" fill="#3a3a3a" />
<text transform="translate(830.8,945.4) scale(0.817,1)" font-size="14.8" fill="#f4f4f4" text-anchor="start" font-weight="normal" stroke="#f4f4f4" stroke-width="0.2">dEITP</text>
<text transform="translate(941.2,945.4) scale(0.8837,1)" font-size="14.8" fill="#f4f4f4" text-anchor="start" font-weight="normal" stroke="#f4f4f4" stroke-width="0.2">78.1694</text>
<text transform="translate(1019.4,945.4) scale(0.8836,1)" font-size="14.8" fill="#f4f4f4" text-anchor="start" font-weight="normal" stroke="#f4f4f4" stroke-width="0.2">3.5066</text>
<text transform="translate(1090.4,945.4) scale(0.8836,1)" font-size="14.8" fill="#f4f4f4" text-anchor="start" font-weight="normal" stroke="#f4f4f4" stroke-width="0.2">2.7033</text>
<text transform="translate(1161.3,945.4) scale(0.8836,1)" font-size="14.8" fill="#f4f4f4" text-anchor="start" font-weight="normal" stroke="#f4f4f4" stroke-width="0.2">3.0266</text>
<text transform="translate(1232.1,945.4) scale(0.8836,1)" font-size="14.8" fill="#f4f4f4" text-anchor="start" font-weight="normal" stroke="#f4f4f4" stroke-width="0.2">3.2190</text>
<text transform="translate(1302.9,945.4) scale(0.8836,1)" font-size="14.8" fill="#f4f4f4" text-anchor="start" font-weight="normal" stroke="#f4f4f4" stroke-width="0.2">3.1803</text>
<text transform="translate(1373.9,945.4) scale(0.8836,1)" font-size="14.8" fill="#f4f4f4" text-anchor="start" font-weight="normal" stroke="#f4f4f4" stroke-width="0.2">3.0996</text>
<text transform="translate(1444.7,945.4) scale(0.8836,1)" font-size="14.8" fill="#f4f4f4" text-anchor="start" font-weight="normal" stroke="#f4f4f4" stroke-width="0.2">3.8646</text>
<text transform="translate(1515.6,945.4) scale(0.8836,1)" font-size="14.8" fill="#f4f4f4" text-anchor="start" font-weight="normal" stroke="#f4f4f4" stroke-width="0.2">3.6650</text>
<text transform="translate(1586.5,945.4) scale(0.8836,1)" font-size="14.8" fill="#f4f4f4" text-anchor="start" font-weight="normal" stroke="#f4f4f4" stroke-width="0.2">3.4596</text>
<text transform="translate(1657.4,945.4) scale(0.8836,1)" font-size="14.8" fill="#f4f4f4" text-anchor="start" font-weight="normal" stroke="#f4f4f4" stroke-width="0.2">3.6726</text>
<rect x="150" y="1011" width="1770" height="47" fill="url(#bs)" />
<rect x="151.1" y="1011.6" width="112" height="45.2" rx="3.5" fill="url(#bbtn)"/>
<rect x="152.6" y="1012" width="109" height="1.3" rx="0.6" fill="#b4b4b4" opacity="0.8"/>
<rect x="153.3" y="1014.4" width="107.6" height="28.6" rx="3" fill="#4a4a4a" opacity="0.55"/>
<rect x="154.3" y="1015.4" width="105.6" height="26.6" rx="2.5" fill="#000000"/>
<text transform="translate(207.1,1053.4) scale(0.92,1)" font-size="8.3" fill="#2c2c2c" text-anchor="middle" font-weight="normal" stroke="#2c2c2c" stroke-width="0.25">0</text>
<rect x="265.1" y="1011.6" width="112" height="45.2" rx="3.5" fill="url(#bbtn)"/>
<rect x="266.6" y="1012" width="109" height="1.3" rx="0.6" fill="#b4b4b4" opacity="0.8"/>
<rect x="267.3" y="1014.4" width="107.6" height="28.6" rx="3" fill="#4a4a4a" opacity="0.55"/>
<rect x="268.3" y="1015.4" width="105.6" height="26.6" rx="2.5" fill="#1b1b1b"/>
<text transform="translate(321.1,1053.4) scale(0.92,1)" font-size="8.3" fill="#2c2c2c" text-anchor="middle" font-weight="normal" stroke="#2c2c2c" stroke-width="0.25">10</text>
<rect x="379.1" y="1011.6" width="112" height="45.2" rx="3.5" fill="url(#bbtn)"/>
<rect x="380.6" y="1012" width="109" height="1.3" rx="0.6" fill="#b4b4b4" opacity="0.8"/>
<rect x="381.3" y="1014.4" width="107.6" height="28.6" rx="3" fill="#4a4a4a" opacity="0.55"/>
<rect x="382.3" y="1015.4" width="105.6" height="26.6" rx="2.5" fill="#333333"/>
<text transform="translate(435.1,1053.4) scale(0.92,1)" font-size="8.3" fill="#2c2c2c" text-anchor="middle" font-weight="normal" stroke="#2c2c2c" stroke-width="0.25">20</text>
<rect x="493.1" y="1011.6" width="112" height="45.2" rx="3.5" fill="url(#bbtn)"/>
<rect x="494.6" y="1012" width="109" height="1.3" rx="0.6" fill="#b4b4b4" opacity="0.8"/>
<rect x="495.3" y="1014.4" width="107.6" height="28.6" rx="3" fill="#4a4a4a" opacity="0.55"/>
<rect x="496.3" y="1015.4" width="105.6" height="26.6" rx="2.5" fill="#4c4c4c"/>
<text transform="translate(549.1,1053.4) scale(0.92,1)" font-size="8.3" fill="#2c2c2c" text-anchor="middle" font-weight="normal" stroke="#2c2c2c" stroke-width="0.25">30</text>
<rect x="607.1" y="1011.6" width="112" height="45.2" rx="3.5" fill="url(#bbtn)"/>
<rect x="608.6" y="1012" width="109" height="1.3" rx="0.6" fill="#b4b4b4" opacity="0.8"/>
<rect x="609.3" y="1014.4" width="107.6" height="28.6" rx="3" fill="#4a4a4a" opacity="0.55"/>
<rect x="610.3" y="1015.4" width="105.6" height="26.6" rx="2.5" fill="#666666"/>
<text transform="translate(663.1,1053.4) scale(0.92,1)" font-size="8.3" fill="#2c2c2c" text-anchor="middle" font-weight="normal" stroke="#2c2c2c" stroke-width="0.25">40</text>
<rect x="721.1" y="1011.6" width="112" height="45.2" rx="3.5" fill="url(#bbtn)"/>
<rect x="722.6" y="1012" width="109" height="1.3" rx="0.6" fill="#b4b4b4" opacity="0.8"/>
<rect x="723.3" y="1014.4" width="107.6" height="28.6" rx="3" fill="#4a4a4a" opacity="0.55"/>
<rect x="724.3" y="1015.4" width="105.6" height="26.6" rx="2.5" fill="#808080"/>
<text transform="translate(777.1,1053.4) scale(0.92,1)" font-size="8.3" fill="#2c2c2c" text-anchor="middle" font-weight="normal" stroke="#2c2c2c" stroke-width="0.25">50</text>
<rect x="835.1" y="1011.6" width="112" height="45.2" rx="3.5" fill="url(#bbtn)"/>
<rect x="836.6" y="1012" width="109" height="1.3" rx="0.6" fill="#b4b4b4" opacity="0.8"/>
<rect x="837.3" y="1014.4" width="107.6" height="28.6" rx="3" fill="#4a4a4a" opacity="0.55"/>
<rect x="838.3" y="1015.4" width="105.6" height="26.6" rx="2.5" fill="#999999"/>
<text transform="translate(891.1,1053.4) scale(0.92,1)" font-size="8.3" fill="#2c2c2c" text-anchor="middle" font-weight="normal" stroke="#2c2c2c" stroke-width="0.25">60</text>
<rect x="949.1" y="1011.6" width="112" height="45.2" rx="3.5" fill="url(#bbtn)"/>
<rect x="950.6" y="1012" width="109" height="1.3" rx="0.6" fill="#b4b4b4" opacity="0.8"/>
<rect x="951.3" y="1014.4" width="107.6" height="28.6" rx="3" fill="#4a4a4a" opacity="0.55"/>
<rect x="952.3" y="1015.4" width="105.6" height="26.6" rx="2.5" fill="#b3b3b3"/>
<text transform="translate(1005.1,1053.4) scale(0.92,1)" font-size="8.3" fill="#2c2c2c" text-anchor="middle" font-weight="normal" stroke="#2c2c2c" stroke-width="0.25">70</text>
<rect x="1063.1" y="1011.6" width="112" height="45.2" rx="3.5" fill="url(#bbtn)"/>
<rect x="1064.6" y="1012" width="109" height="1.3" rx="0.6" fill="#b4b4b4" opacity="0.8"/>
<rect x="1065.3" y="1014.4" width="107.6" height="28.6" rx="3" fill="#4a4a4a" opacity="0.55"/>
<rect x="1066.3" y="1015.4" width="105.6" height="26.6" rx="2.5" fill="#cccccc"/>
<text transform="translate(1119.1,1053.4) scale(0.92,1)" font-size="8.3" fill="#2c2c2c" text-anchor="middle" font-weight="normal" stroke="#2c2c2c" stroke-width="0.25">80</text>
<rect x="1177.1" y="1011.6" width="112" height="45.2" rx="3.5" fill="url(#bbtn)"/>
<rect x="1178.6" y="1012" width="109" height="1.3" rx="0.6" fill="#b4b4b4" opacity="0.8"/>
<rect x="1179.3" y="1014.4" width="107.6" height="28.6" rx="3" fill="#4a4a4a" opacity="0.55"/>
<rect x="1180.3" y="1015.4" width="105.6" height="26.6" rx="2.5" fill="#e5e5e5"/>
<text transform="translate(1233.1,1053.4) scale(0.92,1)" font-size="8.3" fill="#2c2c2c" text-anchor="middle" font-weight="normal" stroke="#2c2c2c" stroke-width="0.25">90</text>
<rect x="1291.1" y="1011.6" width="112" height="45.2" rx="3.5" fill="#292929"/>
<rect x="1294.3" y="1015.4" width="105.6" height="26.6" rx="2.5" fill="#ffffff"/>
<text transform="translate(1347.1,1053.6) scale(0.95,1)" font-size="8.2" fill="#fff" text-anchor="middle" font-weight="bold" >100</text>
<rect x="1715" y="1012.5" width="169" height="22" fill="url(#nb2)" />
<rect x="1748.4" y="1012.5" width="1.2" height="22" fill="#5c5c5c" />
<rect x="1782.6" y="1012.5" width="1.2" height="22" fill="#5c5c5c" />
<rect x="1815.8" y="1012.5" width="1.2" height="22" fill="#5c5c5c" />
<rect x="1849.4" y="1012.5" width="1.2" height="22" fill="#5c5c5c" />
<circle cx="1732" cy="1023" r="6.6" fill="#5a5a5a"/>
<circle cx="1766" cy="1023" r="6.6" fill="#5a5a5a"/>
<circle cx="1800" cy="1023" r="6.6" fill="#5a5a5a"/>
<circle cx="1833" cy="1023" r="6.6" fill="#5a5a5a"/>
<circle cx="1867" cy="1023" r="6.6" fill="#5a5a5a"/>
<circle cx="1902.5" cy="1023" r="6.6" fill="#2c2c2c"/>
<rect x="1715.2" y="1035" width="101.6" height="30" rx="3" fill="url(#nb)" stroke="#c4c4c4" stroke-width="0.8"/>
<rect x="1816.8" y="1035" width="105" height="30" rx="3" fill="url(#nb)" stroke="#c4c4c4" stroke-width="0.8"/>
<circle cx="1737.5" cy="1046.3" r="6.8" fill="#8a8a8a"/><circle cx="1898.3" cy="1046.3" r="6.8" fill="#8a8a8a"/>
<text transform="translate(1737.5,1050.6)" font-size="14" fill="#2c2c2c" text-anchor="middle" font-weight="normal" >«</text>
<text transform="translate(1898.3,1050.6)" font-size="14" fill="#2c2c2c" text-anchor="middle" font-weight="normal" >»</text>
<text transform="translate(1757.4,1051.8) scale(1.0297,1)" font-size="16.6" fill="#2a2a2a" text-anchor="start" font-weight="normal" >Back</text>
<text transform="translate(1837.4,1051.8) scale(1.1485,1)" font-size="16.6" fill="#2a2a2a" text-anchor="start" font-weight="normal" >Next</text>
<rect x="1678" y="1028" width="36" height="30" fill="#6e6e6e" />
<rect x="1684.2" y="1031" width="22.6" height="21.6" rx="3" fill="#8e8e8e" stroke="#c4c4c4" stroke-width="1.1"/>
<rect x="1686.4" y="1033.2" width="18.2" height="17.2" rx="2" fill="none" stroke="#333" stroke-width="1"/>
<rect x="1690.8" y="1036.8" width="10" height="9.6" fill="#000" />
<g fill="none" stroke-linejoin="round" stroke-linecap="round"><path d="M1630.8 995.8L1666.8 1001.2L1670.6 1025.4L1640.8 1029.4L1697.4 1032.4L1656.6 1045.8L1635.8 1035Z" stroke="#d8d0d0" stroke-opacity="0.5" stroke-width="5"/><path d="M1642.6 1010L1653.4 1022.6L1674.2 995.6" stroke="#d8d0d0" stroke-opacity="0.5" stroke-width="5"/><path d="M1630.8 995.8L1666.8 1001.2L1670.6 1025.4L1640.8 1029.4L1697.4 1032.4L1656.6 1045.8L1635.8 1035Z" stroke="#8e2c34" stroke-width="3"/><path d="M1642.6 1010L1653.4 1022.6L1674.2 995.6" stroke="#3c3434" stroke-width="2.8"/></g>
<text transform="translate(1675.6,1025.2) scale(0.9703,1)" font-size="26.4" fill="#8c2830" text-anchor="start" font-weight="bold" fill-opacity="0.8" stroke="#e8d4d4" stroke-opacity="0.55" stroke-width="1.6" paint-order="stroke">NOTEBOOK</text>
<text transform="translate(1824,1025.2) scale(0.9522,1)" font-size="26.4" fill="#e0e0e0" text-anchor="start" font-weight="normal" fill-opacity="0.6" stroke="#e0e0e0" stroke-opacity="0.6" stroke-width="2.8" stroke-linejoin="round">CHECK</text>
<text transform="translate(1824,1025.2) scale(0.9522,1)" font-size="26.4" fill="#303030" text-anchor="start" font-weight="normal" fill-opacity="0.85" stroke="#303030" stroke-opacity="0.85" stroke-width="0.7">CHECK</text>
</svg>
</body></html>
